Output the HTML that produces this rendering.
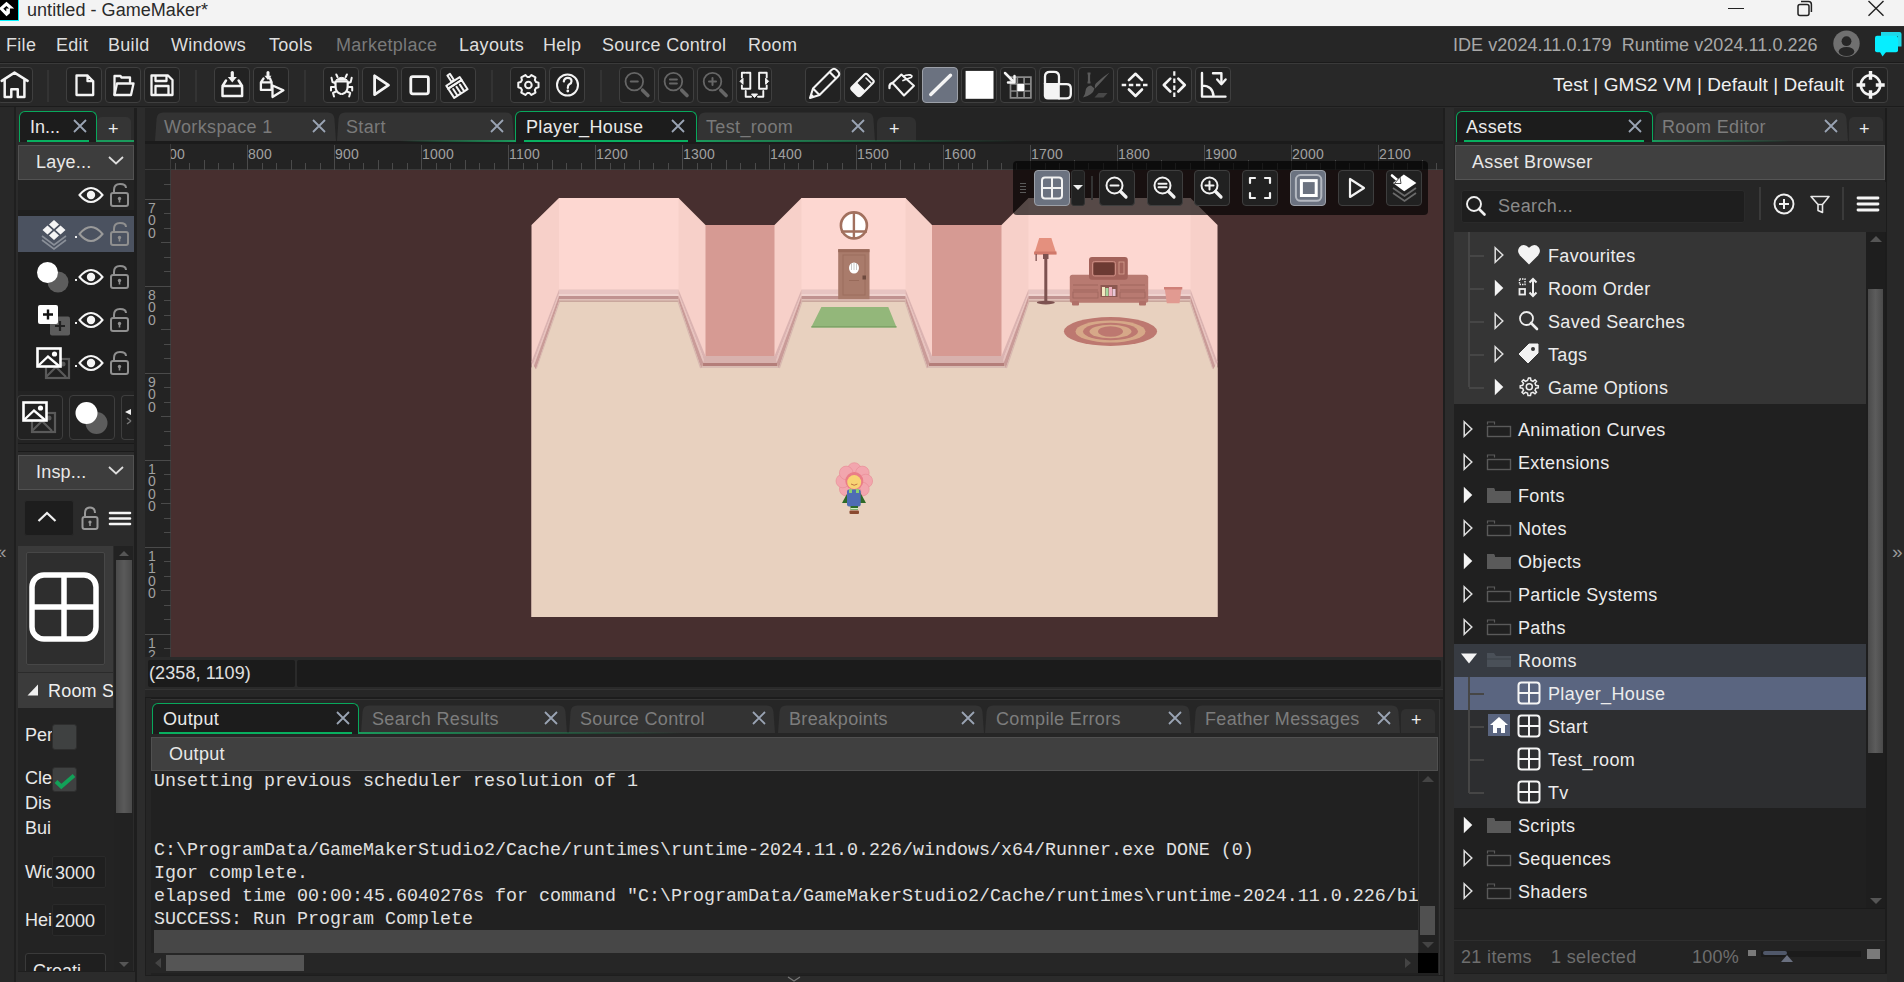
<!DOCTYPE html>
<html><head><meta charset="utf-8">
<style>
*{box-sizing:border-box;margin:0;padding:0}
html,body{width:1904px;height:982px;overflow:hidden;background:#2a2a2a;font-family:"Liberation Sans",sans-serif;color:#dedede}
.a{position:absolute}
.t{position:absolute;white-space:pre;font-size:18px;line-height:20px;letter-spacing:0.3px;color:#dedede}
.tb{position:absolute;top:67px;width:36px;height:36px;border:1px solid #3e3e3e;border-radius:4px;background:#232323}
.tb svg{position:absolute;left:0;top:0}
.sep{position:absolute;top:71px;width:2px;height:30px;background:#303030}
.tab{position:absolute;height:30px;background:#333;border-radius:6px 6px 0 0}
.tab .x{position:absolute;top:5px;right:10px}
.mono{position:absolute;white-space:pre;font-family:"Liberation Mono",monospace;font-size:18.33px;line-height:23px;color:#e0e0e0}
</style></head><body>

<!-- TITLE BAR -->
<div class="a" style="left:0;top:0;width:1904px;height:26px;background:#f3f3f3"></div>
<div class="a" style="left:0;top:0;width:18.8px;height:21px;background:#00f4ff"></div><div class="a" style="left:0;top:0;width:17.5px;height:20px;background:#000"></div>
<svg class="a" style="left:0;top:0" width="18" height="20"><path d="M6.5 1.8 L14.2 8.5 H9.9 V13.2 L6.5 16.3 L-1 8.5 Z M6.4 5.9 L9.1 8.5 H6.3 V11.6 L3.3 8.8 Z" fill="#fff" fill-rule="evenodd"/></svg>
<div class="t" style="left:27px;top:0px;color:#2a2a2a;letter-spacing:0.05px">untitled - GameMaker*</div>
<div class="a" style="left:1728px;top:8px;width:16px;height:1px;background:#222"></div>
<svg class="a" style="left:1796px;top:0px" width="18" height="17"><rect x="2" y="4.6" width="11" height="11" rx="2" fill="none" stroke="#222" stroke-width="1.5"/><path d="M5 1.6 H12.5 Q15.4 1.6 15.4 4.5 V12" fill="none" stroke="#222" stroke-width="1.5"/></svg>
<svg class="a" style="left:1867px;top:0px" width="18" height="18"><path d="M1.5 1 L16.5 15.8 M16.5 1 L1.5 15.8" stroke="#222" stroke-width="1.4"/></svg>

<!-- MENU BAR -->
<div class="a" style="left:0;top:26px;width:1904px;height:37px;background:#262626;border-top:1px solid #2e2e2e;border-bottom:1px solid #1b1b1b"></div>
<div class="t" style="left:6px;top:35px">File</div>
<div class="t" style="left:56px;top:35px">Edit</div>
<div class="t" style="left:108px;top:35px">Build</div>
<div class="t" style="left:171px;top:35px">Windows</div>
<div class="t" style="left:269px;top:35px">Tools</div>
<div class="t" style="left:336px;top:35px;color:#7a7a7a">Marketplace</div>
<div class="t" style="left:459px;top:35px">Layouts</div>
<div class="t" style="left:543px;top:35px">Help</div>
<div class="t" style="left:602px;top:35px">Source Control</div>
<div class="t" style="left:748px;top:35px">Room</div>
<div class="t" style="left:1453px;top:35px;color:#a8a8a8;letter-spacing:0.05px">IDE v2024.11.0.179  Runtime v2024.11.0.226</div>

<svg class="a" style="left:1832px;top:29px" width="30" height="30"><defs><clipPath id="avc"><circle cx="14.5" cy="14.6" r="13.2"/></clipPath></defs><circle cx="14.5" cy="14.6" r="13.2" fill="#707070"/><g clip-path="url(#avc)"><circle cx="14.5" cy="12.2" r="4.9" fill="#262626"/><ellipse cx="14.5" cy="22.5" rx="7.8" ry="4.6" fill="#262626"/></g></svg>
<svg class="a" style="left:1872px;top:29px" width="32" height="30"><path d="M9 3 H27.5 Q29.5 3 29.5 5 V17.5 H26 V7 H9 Z" fill="#1ed8e8"/><rect x="3" y="6.8" width="23" height="16.5" rx="2" fill="#06eeff"/><path d="M8 23 L10.5 27.5 L14 23 Z" fill="#06eeff"/></svg>
<!-- TOOLBAR -->
<div class="a" style="left:0;top:63px;width:1904px;height:44px;background:#282828;border-top:1px solid #3a3a3a;border-bottom:1px solid #1c1c1c"></div>
<div class="a" style="left:-3px;top:67px;width:36px;height:36px;border:1px solid #3f3f3f;border-radius:4px;background:#222;"></div>
<div class="a" style="left:66px;top:67px;width:36px;height:36px;border:1px solid #3f3f3f;border-radius:4px;background:#222;"></div>
<div class="a" style="left:105px;top:67px;width:36px;height:36px;border:1px solid #3f3f3f;border-radius:4px;background:#222;"></div>
<div class="a" style="left:144px;top:67px;width:36px;height:36px;border:1px solid #3f3f3f;border-radius:4px;background:#222;"></div>
<div class="a" style="left:214px;top:67px;width:36px;height:36px;border:1px solid #3f3f3f;border-radius:4px;background:#222;"></div>
<div class="a" style="left:253px;top:67px;width:36px;height:36px;border:1px solid #3f3f3f;border-radius:4px;background:#222;"></div>
<div class="a" style="left:323px;top:67px;width:36px;height:36px;border:1px solid #3f3f3f;border-radius:4px;background:#222;"></div>
<div class="a" style="left:362px;top:67px;width:36px;height:36px;border:1px solid #3f3f3f;border-radius:4px;background:#222;"></div>
<div class="a" style="left:401px;top:67px;width:36px;height:36px;border:1px solid #3f3f3f;border-radius:4px;background:#222;"></div>
<div class="a" style="left:440px;top:67px;width:36px;height:36px;border:1px solid #3f3f3f;border-radius:4px;background:#222;"></div>
<div class="a" style="left:510px;top:67px;width:36px;height:36px;border:1px solid #3f3f3f;border-radius:4px;background:#222;"></div>
<div class="a" style="left:549px;top:67px;width:36px;height:36px;border:1px solid #3f3f3f;border-radius:4px;background:#222;"></div>
<div class="a" style="left:619px;top:67px;width:36px;height:36px;border:1px solid #3f3f3f;border-radius:4px;background:#222;"></div>
<div class="a" style="left:658px;top:67px;width:36px;height:36px;border:1px solid #3f3f3f;border-radius:4px;background:#222;"></div>
<div class="a" style="left:697px;top:67px;width:36px;height:36px;border:1px solid #3f3f3f;border-radius:4px;background:#222;"></div>
<div class="a" style="left:736px;top:67px;width:36px;height:36px;border:1px solid #3f3f3f;border-radius:4px;background:#222;"></div>
<div class="a" style="left:805px;top:67px;width:36px;height:36px;border:1px solid #3f3f3f;border-radius:4px;background:#222;"></div>
<div class="a" style="left:844px;top:67px;width:36px;height:36px;border:1px solid #3f3f3f;border-radius:4px;background:#222;"></div>
<div class="a" style="left:883px;top:67px;width:36px;height:36px;border:1px solid #3f3f3f;border-radius:4px;background:#222;"></div>
<div class="a" style="left:922px;top:67px;width:36px;height:36px;border:1px solid #3f3f3f;border-radius:4px;background:#222;background:#6b7280;border-color:#9ca0a8"></div>
<div class="a" style="left:961px;top:67px;width:36px;height:36px;border:1px solid #3f3f3f;border-radius:4px;background:#222;"></div>
<div class="a" style="left:1000px;top:67px;width:36px;height:36px;border:1px solid #3f3f3f;border-radius:4px;background:#222;"></div>
<div class="a" style="left:1039px;top:67px;width:36px;height:36px;border:1px solid #3f3f3f;border-radius:4px;background:#222;"></div>
<div class="a" style="left:1078px;top:67px;width:36px;height:36px;border:1px solid #3f3f3f;border-radius:4px;background:#222;"></div>
<div class="a" style="left:1117px;top:67px;width:36px;height:36px;border:1px solid #3f3f3f;border-radius:4px;background:#222;"></div>
<div class="a" style="left:1156px;top:67px;width:36px;height:36px;border:1px solid #3f3f3f;border-radius:4px;background:#222;"></div>
<div class="a" style="left:1195px;top:67px;width:36px;height:36px;border:1px solid #3f3f3f;border-radius:4px;background:#222;"></div>
<div class="a" style="left:1852px;top:67px;width:36px;height:36px;border:1px solid #3f3f3f;border-radius:4px;background:#222;"></div>
<div class="a" style="left:47px;top:70px;width:2px;height:32px;background:#333"></div>
<div class="a" style="left:195px;top:70px;width:2px;height:32px;background:#333"></div>
<div class="a" style="left:304px;top:70px;width:2px;height:32px;background:#333"></div>
<div class="a" style="left:491px;top:70px;width:2px;height:32px;background:#333"></div>
<div class="a" style="left:600px;top:70px;width:2px;height:32px;background:#333"></div>
<svg class="a" style="left:0;top:63px" width="1904" height="44" viewBox="0 63 1904 44"><path d="M1.7 80.9 L14.5 72.6 L27.6 80.9 M4.7 79.5 V96.9 H11.3 V89.2 H17.75 V96.9 H24.4 V79.5" stroke="#f4f4f4" fill="none" stroke-linejoin="round" stroke-linecap="round" stroke-width="2.5"/><path d="M76.5 75.5 H87.5 L93.2 81.2 V95 H76.5 Z M87.5 75.5 V81.2 H93.2" stroke="#f4f4f4" fill="none" stroke-linejoin="round" stroke-linecap="round" stroke-width="2.3"/><path d="M114.5 95 V76 H120.5 L121.5 77.5 H130 V82" stroke="#f4f4f4" fill="none" stroke-linejoin="round" stroke-linecap="round" stroke-width="2.3"/><path d="M114.5 95 L117 83.5 H133.5 L131 95 Z" stroke="#f4f4f4" fill="none" stroke-linejoin="round" stroke-linecap="round" stroke-width="2.3"/><path d="M151.5 75.5 H168 L172.5 80 V95 H151.5 Z M155.5 75.5 V81 H166.5 V75.5 M155.5 95 V86 H168.5 V95" stroke="#f4f4f4" fill="none" stroke-linejoin="round" stroke-linecap="round" stroke-width="2.3"/><path d="M222.5 86 H242.1 V95.9 H222.5 Z M222.5 86 L226 80.5 M242.1 86 L238.6 80.5" stroke="#f4f4f4" fill="none" stroke-linejoin="round" stroke-linecap="round" stroke-width="2.5"/><path d="M232.3 72.5 V78" stroke="#f4f4f4" fill="none" stroke-linejoin="round" stroke-linecap="round" stroke-width="3.2"/><path d="M227.8 77 H236.8 L232.3 82.5 Z" fill="#f4f4f4"/><path d="M260.9 82.3 H271.6 V89.9 H260.9 Z M260.9 82.3 L263.5 78.5 M271.6 82.3 L270 78.5" stroke="#f4f4f4" fill="none" stroke-linejoin="round" stroke-linecap="round" stroke-width="2.3"/><path d="M268 72.5 V76.5" stroke="#f4f4f4" fill="none" stroke-linejoin="round" stroke-linecap="round" stroke-width="3"/><path d="M264.5 75.8 H271.5 L268 80 Z" fill="#f4f4f4"/><path d="M272.5 85.5 V97 L283.4 90.3 Z" stroke="#f4f4f4" fill="none" stroke-linejoin="round" stroke-linecap="round" stroke-width="2.3" fill="#222"/><path d="M335.8 80.2 Q341.6 74.5 347.4 80.2 Z" fill="#f4f4f4" stroke="#f4f4f4" stroke-width="1"/><path d="M337.5 77 L336.3 74.5 M345.7 77 L346.9 74.5" stroke="#f4f4f4" fill="none" stroke-linejoin="round" stroke-linecap="round" stroke-width="2"/><path d="M340.8 94 Q335.5 92.5 335.5 86 V81.5 H347.7 V86 Q347.7 92.5 342.4 94" stroke="#f4f4f4" fill="none" stroke-linejoin="round" stroke-linecap="round" stroke-width="2.2"/><path d="M335 83 L332.5 82 L331.5 77.8 M348.2 83 L350.7 82 L351.7 77.8 M334.5 87 H331 V90.5 M348.7 87 H352.2 V90.5 M336 91.5 L333 93 L334 96.5 M347.2 91.5 L350.2 93 L349.2 96.5" stroke="#f4f4f4" fill="none" stroke-linejoin="round" stroke-linecap="round" stroke-width="2"/><path d="M374.6 75.8 V94.7 L388.5 85.2 Z" stroke="#f4f4f4" fill="none" stroke-linejoin="round" stroke-linecap="round" stroke-width="2.8"/><rect x="410.8" y="76.6" width="17.6" height="17.2" rx="2" stroke="#f4f4f4" fill="none" stroke-linejoin="round" stroke-linecap="round" stroke-width="2.8"/><g transform="rotate(-33 456 86)"><path d="M454.5 72.5 H457.5 V80 H454.5 Z" stroke="#f4f4f4" fill="none" stroke-linejoin="round" stroke-linecap="round" stroke-width="2"/><path d="M448 80.5 H464 V84 H448 Z" stroke="#f4f4f4" fill="none" stroke-linejoin="round" stroke-linecap="round" stroke-width="2"/><path d="M448 84 H464 V95 H448 Z M452 87 V95 M456 87 V95 M460 87 V95" stroke="#f4f4f4" fill="none" stroke-linejoin="round" stroke-linecap="round" stroke-width="2"/></g><path d="M521.94 79.95 L521.31 77.39 L525.36 75.05 L527.26 76.88 L529.54 76.88 L531.44 75.05 L535.49 77.39 L534.86 79.95 L536.00 81.93 L538.53 82.66 L538.53 87.34 L536.00 88.07 L534.86 90.05 L535.49 92.61 L531.44 94.95 L529.54 93.12 L527.26 93.12 L525.36 94.95 L521.31 92.61 L521.94 90.05 L520.80 88.07 L518.27 87.34 L518.27 82.66 L520.80 81.93 Z" stroke="#f4f4f4" fill="none" stroke-linejoin="round" stroke-linecap="round" stroke-width="2"/><circle cx="528.4" cy="85" r="3.3" stroke="#f4f4f4" fill="none" stroke-linejoin="round" stroke-linecap="round" stroke-width="2"/><circle cx="567.5" cy="85" r="10.5" stroke="#f4f4f4" fill="none" stroke-linejoin="round" stroke-linecap="round" stroke-width="2"/><path d="M563.8 81.5 Q564.3 77.8 567.8 77.8 Q571.5 77.8 571.5 81.2 Q571.5 83.2 569.3 84.3 Q567.8 85.1 567.8 88" stroke="#f4f4f4" fill="none" stroke-linejoin="round" stroke-linecap="round" stroke-width="2.2"/><circle cx="567.8" cy="91" r="1.4" fill="#f4f4f4"/><g stroke="#666" fill="none" stroke-linecap="round"><circle cx="634.3" cy="81.6" r="8.8" stroke-width="1.8"/><path d="M630.8 81.6 H637.8" stroke-width="2"/><path d="M642.5999999999999 90.2 L647.9 95.5" stroke-width="3.6"/></g><g stroke="#666" fill="none" stroke-linecap="round"><circle cx="673.4" cy="81.6" r="8.8" stroke-width="1.8"/><path d="M669.9 79.6 H676.9 M669.9 83.6 H676.9" stroke-width="2"/><path d="M681.6999999999999 90.2 L687.0 95.5" stroke-width="3.6"/></g><g stroke="#666" fill="none" stroke-linecap="round"><circle cx="712.5" cy="81.6" r="8.8" stroke-width="1.8"/><path d="M709 81.6 H716 M712.5 78.1 V85.1" stroke-width="2"/><path d="M720.8 90.2 L726.1 95.5" stroke-width="3.6"/></g><path d="M745 72.8 H741.9 V77.5 M741.9 85.5 V88.8 H750.3 V72.8 H746.5 M762.5 72.8 H759.1 V88.8 H766.7 V85.5 M766.7 77.5 V72.8 H763.5" stroke="#f4f4f4" fill="none" stroke-linejoin="round" stroke-linecap="round" stroke-width="1.9"/><path d="M745.7 90.9 V96.8 H751 M763.3 90.9 V96.8 H758" stroke="#f4f4f4" fill="none" stroke-linejoin="round" stroke-linecap="round" stroke-width="1.9"/><path d="M740 81.3 L743 78.3 V84.3 Z M768.6 81.3 L765.6 78.3 V84.3 Z M751.5 94 H757.5 L754.5 97.5 Z" fill="#f4f4f4" stroke="#f4f4f4" stroke-width="1"/><path d="M810 98 L813 88.5 L831.5 70 Q834 67.5 836.5 70 L838 71.5 Q840.5 74 838 76.5 L819.5 95 Z M813 88.5 L819.5 95 M829.6 72 L836.1 78.5" stroke="#f4f4f4" fill="none" stroke-linejoin="round" stroke-linecap="round" stroke-width="2.1"/><path d="M810 98 L811.4 93.6 L814.4 96.6 Z" fill="#f4f4f4"/><path d="M852 87 L864.5 74.5 Q866 73 867.5 74.5 L873 80 Q874.5 81.5 873 83 L860.5 95.5 Q859 97 857.5 95.5 L852 90 Q850.5 88.5 852 87 Z" stroke="#f4f4f4" fill="none" stroke-linejoin="round" stroke-linecap="round" stroke-width="2.1"/><path d="M852 87 L856.8 82.2 L865.3 90.7 L860.5 95.5 Q859 97 857.5 95.5 L852 90 Q850.5 88.5 852 87 Z" fill="#f4f4f4"/><path d="M866 78 L871 83" stroke="#f4f4f4" fill="none" stroke-linejoin="round" stroke-linecap="round" stroke-width="1.6"/><path d="M901.4 74.5 L913.9 85.7 L904 95.5 L892.6 83 Z" stroke="#f4f4f4" fill="none" stroke-linejoin="round" stroke-linecap="round" stroke-width="2.1"/><path d="M903 80.5 L911 77.5 Q913 75.8 910.5 75 Q906 74.5 903.5 76.5" stroke="#f4f4f4" fill="none" stroke-linejoin="round" stroke-linecap="round" stroke-width="1.8"/><path d="M892.6 83 Q889 83.5 889.5 88" stroke="#f4f4f4" fill="none" stroke-linejoin="round" stroke-linecap="round" stroke-width="2.3"/><path d="M930.8 94.5 L950.5 75.2" stroke="#f4f4f4" stroke-width="3.4" stroke-linecap="round"/><rect x="965.6" y="70.9" width="27.9" height="27.9" fill="#fff"/><path d="M1010.5 77.2 H1030.9 V97.8 H1010.5 Z M1010.5 84 H1030.9 M1010.5 91 H1030.9 M1017.3 77.2 V97.8 M1024.1 77.2 V97.8" stroke="#8a8a8a" stroke-width="1.7" fill="none"/><rect x="1017.3" y="84" width="6.8" height="7" fill="#fff"/><path d="M1005 73 L1013.5 81.5" stroke="#f4f4f4" fill="none" stroke-linejoin="round" stroke-linecap="round" stroke-width="2.5"/><path d="M1008 82.5 H1014.5 V76" stroke="#f4f4f4" fill="none" stroke-linejoin="round" stroke-linecap="round" stroke-width="2.5"/><path d="M1045 84 V76.5 Q1045 71.8 1050 71.8 H1054 Q1059 71.8 1059 76.5 V84" stroke="#f4f4f4" fill="none" stroke-linejoin="round" stroke-linecap="round" stroke-width="2.3"/><path d="M1059 84.2 H1066.5 Q1070.8 84.2 1070.8 88.5 V94 Q1070.8 98.4 1066.5 98.4 H1059" stroke="#f4f4f4" fill="none" stroke-linejoin="round" stroke-linecap="round" stroke-width="2.3"/><path d="M1043.8 83 H1059.8 V99.5 H1048 Q1043.8 99.5 1043.8 95.3 Z" fill="#f4f4f4"/><path d="M1109.5 72.5 Q1106 77 1097 86.5 L1095 88.5 Q1094 84 1097.5 82 Q1104 76 1109.5 72.5 Z" fill="#5a5a5a"/><path d="M1094.5 88.5 Q1093 95 1083 97.5 Q1085.5 94 1085.5 91 Q1086 86 1091 85.5 Z" fill="#5a5a5a"/><path d="M1094.5 97.5 L1098.5 93 H1107.5 L1103.5 97.5 Z" fill="#484848"/><path d="M1087.5 73.5 H1090.5 M1089 73.5 V82.5 M1087.5 82.5 H1090.5" stroke="#5a5a5a" stroke-width="2.2"/><path d="M1128.9 80.1 L1135.5 73.8 L1142 80.1 M1128.9 89.5 L1135.5 96 L1142 89.5" stroke="#f4f4f4" fill="none" stroke-linejoin="round" stroke-linecap="round" stroke-width="2.6"/><path d="M1121.7 85 H1149.2" stroke="#f4f4f4" stroke-width="2.4" stroke-dasharray="4.5 2.6"/><path d="M1170.3 78.6 L1163.8 85 L1170.3 91.5 M1178.3 78.6 L1184.8 85 L1178.3 91.5" stroke="#f4f4f4" fill="none" stroke-linejoin="round" stroke-linecap="round" stroke-width="2.6"/><path d="M1174.3 71.3 V98.7" stroke="#f4f4f4" stroke-width="2.2" stroke-dasharray="4.5 2.6"/><path d="M1202 73 V96.6 H1225.5 M1202 85.6 Q1213 85.6 1213.6 96.6" stroke="#f4f4f4" fill="none" stroke-linejoin="round" stroke-linecap="round" stroke-width="2.4"/><path d="M1213 73.2 H1221.4 V82" stroke="#f4f4f4" fill="none" stroke-linejoin="round" stroke-linecap="round" stroke-width="2.4"/><path d="M1217.2 79.5 L1221.4 84.2 L1225.6 79.5" stroke="#f4f4f4" fill="none" stroke-linejoin="round" stroke-linecap="round" stroke-width="2.4"/><circle cx="1870.5" cy="85" r="9.7" stroke="#f4f4f4" fill="none" stroke-linejoin="round" stroke-linecap="round" stroke-width="2.6"/><path d="M1870.5 71.1 V79.8 M1870.5 90.3 V98.7 M1856.5 85 H1865.2 M1875.8 85 H1884.7" stroke="#f4f4f4" stroke-width="3.4"/></svg>
<div class="t" style="left:1553px;top:75px;font-size:19px;letter-spacing:0.05px;color:#f0f0f0">Test | GMS2 VM | Default | Default</div>

<!-- MAIN BG -->
<div class="a" style="left:0;top:107px;width:1904px;height:875px;background:#2b2b2b"></div>

<!-- LEFT GUTTER -->
<div class="a" style="left:0;top:107px;width:16px;height:875px;background:#282828;border-right:2px solid #1f1f1f"></div>
<div class="t" style="left:-4px;top:542px;font-size:19px;color:#9a9a9a;letter-spacing:-1px">&#171;</div>

<!-- LEFT PANEL -->
<div class="a" style="left:18px;top:108px;width:117px;height:867px;background:#2b2b2b"></div>
<div class="a" style="left:134px;top:108px;width:3px;height:874px;background:#1e1e1e"></div>
<div class="a" style="left:137px;top:108px;width:8px;height:874px;background:#2c2c2c"></div>
<!-- panel tabs -->
<div class="a" style="left:19px;top:111px;width:78px;height:31px;background:#1c1c1c;border:1.5px solid #08a85c;border-bottom:none;border-radius:6px 6px 0 0"></div>
<div class="a" style="left:27px;top:140px;width:62px;height:2.2px;background:#08b060"></div>
<div class="t" style="left:30px;top:117px;color:#e8e8e8;letter-spacing:0">In...</div>
<svg class="a" style="left:72px;top:118px" width="16" height="16"><path d="M2 2 L14 14 M14 2 L2 14" stroke="#9aa4b4" stroke-width="1.8"/></svg>
<div class="a" style="left:97px;top:117px;width:34px;height:24px;background:#353535;border-radius:5px 5px 0 0"></div>
<div class="t" style="left:108px;top:119px;color:#eee">+</div>
<div class="a" style="left:96px;top:140px;width:38px;height:2px;background:#1a9a5c"></div>
<!-- Layers dropdown -->
<div class="a" style="left:18px;top:145px;width:116px;height:35px;background:#3d3d3d;border:1px solid #525252"></div>
<div class="t" style="left:36px;top:152px;color:#e8e8e8;letter-spacing:0.2px">Laye...</div>
<svg class="a" style="left:107px;top:155px" width="18" height="12"><path d="M2 2 L9 8.5 L16 2" stroke="#ddd" stroke-width="1.8" fill="none"/></svg>
<!-- layer list -->
<div class="a" style="left:18px;top:180px;width:116px;height:211px;background:#1f1f1f"></div>
<div class="a" style="left:18px;top:180px;width:116px;height:30px;background:#232323"></div>
<div class="a" style="left:18px;top:216px;width:116px;height:36px;background:#4b5260"></div>
<!-- layer rows -->
<svg class="a" style="left:78px;top:186px" width="27" height="18"><path d="M1.5 9 Q13 -5 24.5 9 Q13 23 1.5 9 Z" stroke="#f5f5f5" stroke-width="2" fill="none"/><circle cx="13" cy="9" r="4.2" fill="#f5f5f5"/></svg><svg class="a" style="left:109px;top:182px" width="22" height="26"><path d="M5 11 V8 Q5 2 11 2 Q17 2 17 6" stroke="#8f8f8f" stroke-width="2" fill="none"/><rect x="2" y="11" width="17" height="13" rx="2" stroke="#8f8f8f" stroke-width="2" fill="none"/><circle cx="10.5" cy="16.5" r="1.7" fill="#8f8f8f"/><path d="M10.5 16.5 V20.5" stroke="#8f8f8f" stroke-width="1.6"/></svg><svg class="a" style="left:38px;top:218px" width="32" height="32"><path d="M15.5 8 L22 14 L15.5 20 L9 14 Z" stroke="none" fill="none"/><path d="M16 2 L21 6.5 L16 11 L11 6.5 Z M9.5 7.5 L14.5 12 L9.5 16.5 L4.5 12 Z M22.5 7.5 L27.5 12 L22.5 16.5 L17.5 12 Z M16 13 L21 17.5 L16 22 L11 17.5 Z" fill="#f5f5f5"/><path d="M4 18 L16 27 L28 18 M4 22 L16 31 L28 22" stroke="#8a8f98" stroke-width="1.6" fill="none"/></svg><div class="a" style="left:75px;top:236px;width:2px;height:2px;background:#eee"></div><svg class="a" style="left:78px;top:225px" width="27" height="18"><path d="M1.5 9 Q13 -5 24.5 9 Q13 23 1.5 9 Z" stroke="#9a9a9a" stroke-width="2" fill="none"/></svg><svg class="a" style="left:109px;top:221px" width="22" height="26"><path d="M5 11 V8 Q5 2 11 2 Q17 2 17 6" stroke="#8f8f8f" stroke-width="2" fill="none"/><rect x="2" y="11" width="17" height="13" rx="2" stroke="#8f8f8f" stroke-width="2" fill="none"/><circle cx="10.5" cy="16.5" r="1.7" fill="#8f8f8f"/><path d="M10.5 16.5 V20.5" stroke="#8f8f8f" stroke-width="1.6"/></svg><svg class="a" style="left:35px;top:259px" width="36" height="36"><circle cx="23" cy="23" r="10.5" fill="#5d5d5d"/><circle cx="12.5" cy="13.5" r="10.5" fill="#fff"/></svg><div class="a" style="left:75px;top:279px;width:2px;height:2px;background:#eee"></div><svg class="a" style="left:78px;top:268px" width="27" height="18"><path d="M1.5 9 Q13 -5 24.5 9 Q13 23 1.5 9 Z" stroke="#f5f5f5" stroke-width="2" fill="none"/><circle cx="13" cy="9" r="4.2" fill="#f5f5f5"/></svg><svg class="a" style="left:109px;top:264px" width="22" height="26"><path d="M5 11 V8 Q5 2 11 2 Q17 2 17 6" stroke="#8f8f8f" stroke-width="2" fill="none"/><rect x="2" y="11" width="17" height="13" rx="2" stroke="#8f8f8f" stroke-width="2" fill="none"/><circle cx="10.5" cy="16.5" r="1.7" fill="#8f8f8f"/><path d="M10.5 16.5 V20.5" stroke="#8f8f8f" stroke-width="1.6"/></svg><svg class="a" style="left:36px;top:303px" width="36" height="36"><rect x="14" y="13.5" width="20" height="19" rx="2" fill="#5d5d5d"/><path d="M24 18 V28 M19 23 H29" stroke="#222" stroke-width="2.2"/><rect x="2" y="2" width="20" height="19" rx="2" fill="#fff"/><path d="M12 6.5 V16.5 M7 11.5 H17" stroke="#111" stroke-width="2.4"/></svg><div class="a" style="left:75px;top:322px;width:2px;height:2px;background:#eee"></div><svg class="a" style="left:78px;top:311px" width="27" height="18"><path d="M1.5 9 Q13 -5 24.5 9 Q13 23 1.5 9 Z" stroke="#f5f5f5" stroke-width="2" fill="none"/><circle cx="13" cy="9" r="4.2" fill="#f5f5f5"/></svg><svg class="a" style="left:109px;top:307px" width="22" height="26"><path d="M5 11 V8 Q5 2 11 2 Q17 2 17 6" stroke="#8f8f8f" stroke-width="2" fill="none"/><rect x="2" y="11" width="17" height="13" rx="2" stroke="#8f8f8f" stroke-width="2" fill="none"/><circle cx="10.5" cy="16.5" r="1.7" fill="#8f8f8f"/><path d="M10.5 16.5 V20.5" stroke="#8f8f8f" stroke-width="1.6"/></svg><svg class="a" style="left:35px;top:346px" width="38" height="36"><g stroke="#5a5a5a" stroke-width="2.2" fill="none"><rect x="11" y="13" width="23" height="19"/><path d="M11 31 L21 21 L31 31"/></g><circle cx="28" cy="18" r="2.5" fill="#5a5a5a"/><rect x="2.5" y="2.5" width="23" height="18" fill="#222" stroke="#fff" stroke-width="2.6"/><path d="M3 20 L13 10.5 L24 20" stroke="#fff" stroke-width="2.4" fill="none"/><circle cx="19.5" cy="8" r="2.6" fill="#fff"/></svg><div class="a" style="left:75px;top:365px;width:2px;height:2px;background:#eee"></div><svg class="a" style="left:78px;top:354px" width="27" height="18"><path d="M1.5 9 Q13 -5 24.5 9 Q13 23 1.5 9 Z" stroke="#f5f5f5" stroke-width="2" fill="none"/><circle cx="13" cy="9" r="4.2" fill="#f5f5f5"/></svg><svg class="a" style="left:109px;top:350px" width="22" height="26"><path d="M5 11 V8 Q5 2 11 2 Q17 2 17 6" stroke="#8f8f8f" stroke-width="2" fill="none"/><rect x="2" y="11" width="17" height="13" rx="2" stroke="#8f8f8f" stroke-width="2" fill="none"/><circle cx="10.5" cy="16.5" r="1.7" fill="#8f8f8f"/><path d="M10.5 16.5 V20.5" stroke="#8f8f8f" stroke-width="1.6"/></svg>
<!-- layer type buttons -->
<div class="a" style="left:18px;top:391px;width:116px;height:52px;background:#232323"></div>
<div class="a" style="left:17px;top:395px;width:46px;height:45px;border:1px solid #3e3e3e;border-radius:4px;background:#222"></div>
<div class="a" style="left:69px;top:395px;width:46px;height:45px;border:1px solid #3e3e3e;border-radius:4px;background:#222"></div>
<div class="a" style="left:121px;top:395px;width:13px;height:45px;border:1px solid #3e3e3e;border-right:none;border-radius:4px 0 0 4px;background:#222"></div>
<svg class="a" style="left:21px;top:400px" width="38" height="36"><g stroke="#5a5a5a" stroke-width="2.2" fill="none"><rect x="11" y="13" width="23" height="19"/><path d="M11 31 L21 21 L31 31"/></g><circle cx="28" cy="18" r="2.5" fill="#5a5a5a"/><rect x="2.5" y="2.5" width="23" height="18" fill="#222" stroke="#fff" stroke-width="2.6"/><path d="M3 20 L13 10.5 L24 20" stroke="#fff" stroke-width="2.4" fill="none"/><circle cx="19.5" cy="8" r="2.6" fill="#fff"/></svg><svg class="a" style="left:73px;top:400px" width="36" height="36"><circle cx="23.5" cy="23" r="11" fill="#5d5d5d"/><circle cx="13.5" cy="13" r="11" fill="#fff"/></svg><svg class="a" style="left:124px;top:408px" width="10" height="20"><path d="M1 4 L7 1 V7 Z" fill="#eee"/><path d="M3 10 L7 13 M3 16 L7 13" stroke="#777" stroke-width="1.5"/></svg>
<div class="a" style="left:18px;top:443px;width:116px;height:9px;background:#262626;border-top:1px solid #1a1a1a;border-bottom:1px solid #1a1a1a"></div>
<!-- Inspector dropdown -->
<div class="a" style="left:18px;top:455px;width:116px;height:35px;background:#3d3d3d;border:1px solid #525252"></div>
<div class="t" style="left:36px;top:462px;color:#e8e8e8;letter-spacing:0.2px">Insp...</div>
<svg class="a" style="left:107px;top:465px" width="18" height="12"><path d="M2 2 L9 8.5 L16 2" stroke="#ddd" stroke-width="1.8" fill="none"/></svg>
<!-- inspector toolbar -->
<div class="a" style="left:24px;top:500px;width:50px;height:36px;background:#1d1d1d;border:1px solid #2a2a2a;border-radius:3px"></div>
<svg class="a" style="left:36px;top:510px" width="22" height="14"><path d="M2.5 11 L11 3 L19.5 11" stroke="#f0f0f0" stroke-width="2.2" fill="none"/></svg>
<svg class="a" style="left:80px;top:504px" width="20" height="28"><path d="M5 13 V9 Q5 3.5 10 3.5 Q15 3.5 15 9" stroke="#9a9a9a" stroke-width="2" fill="none"/><rect x="2.5" y="13" width="15" height="12" rx="2" stroke="#9a9a9a" stroke-width="2" fill="none"/><circle cx="10" cy="18" r="1.6" fill="#9a9a9a"/><path d="M10 18 V22" stroke="#9a9a9a" stroke-width="1.5"/></svg>
<svg class="a" style="left:108px;top:510px" width="24" height="18"><path d="M2 3 H22 M2 8.5 H22 M2 14 H22" stroke="#f5f5f5" stroke-width="2.6" stroke-linecap="round"/></svg>
<!-- thumbnail -->
<div class="a" style="left:18px;top:546px;width:95px;height:126px;background:#3a3a3a"></div>
<div class="a" style="left:26px;top:552px;width:79px;height:113px;background:#2e2e2e;border:1px solid #474747;border-radius:2px"></div>
<svg class="a" style="left:29px;top:572px" width="70" height="70"><rect x="3" y="3" width="64" height="64" rx="12" stroke="#fff" stroke-width="5.5" fill="none"/><path d="M35 3 V67 M3 35 H67" stroke="#fff" stroke-width="5.5"/></svg>
<!-- inspector scrollbar -->
<div class="a" style="left:114px;top:546px;width:19px;height:425px;background:#222"></div>
<div class="a" style="left:116px;top:560px;width:16px;height:253px;background:linear-gradient(90deg,#4a4a4a,#5a5a5a 50%,#4a4a4a)"></div>
<svg class="a" style="left:117px;top:548px" width="14" height="10"><path d="M2 8 L7 3 L12 8 Z" fill="#555"/></svg>
<svg class="a" style="left:117px;top:960px" width="14" height="10"><path d="M2 2 L7 7 L12 2 Z" fill="#555"/></svg>
<!-- Room Settings header -->
<div class="a" style="left:18px;top:673px;width:95px;height:35px;background:#3b3b3b"></div>
<svg class="a" style="left:26px;top:683px" width="14" height="14"><path d="M12 1.5 V12.5 H1.5 Z" fill="#f0f0f0"/></svg>
<div class="a" style="left:18px;top:708px;width:96px;height:263px;background:#232323;overflow:hidden">
  <div class="t" style="left:7px;top:17px;color:#e8e8e8;letter-spacing:0">Per</div>
  <div class="a" style="left:34px;top:16px;width:25px;height:26px;background:#3f4141;border:1px solid #2e2e2e;border-radius:3px"></div>
  <div class="t" style="left:7px;top:60px;color:#e8e8e8;letter-spacing:0">Cle</div>
  <div class="a" style="left:34px;top:59px;width:25px;height:25px;background:#3f4141;border:1px solid #2e2e2e;border-radius:3px"></div>
  <svg class="a" style="left:35px;top:61px" width="24" height="22"><path d="M3 12.5 L8.3 17.5 L21 6.5" stroke="#12a158" stroke-width="4" fill="none" stroke-linecap="butt" stroke-linejoin="miter"/></svg>
  <div class="t" style="left:7px;top:85px;color:#e8e8e8;letter-spacing:0">Dis</div>
  <div class="t" style="left:7px;top:110px;color:#e8e8e8;letter-spacing:0">Bui</div>
  <div class="t" style="left:7px;top:154px;color:#e8e8e8;letter-spacing:0">Wid</div>
  <div class="a" style="left:34px;top:148px;width:54px;height:32px;background:#1f1f1f;border:1px solid #2a2a2a;border-radius:2px;overflow:hidden"><div class="t" style="left:2px;top:6px;color:#e8e8e8;letter-spacing:0">3000</div></div>
  <div class="t" style="left:7px;top:202px;color:#e8e8e8;letter-spacing:0">Hei</div>
  <div class="a" style="left:34px;top:196px;width:54px;height:32px;background:#1f1f1f;border:1px solid #2a2a2a;border-radius:2px;overflow:hidden"><div class="t" style="left:2px;top:6px;color:#e8e8e8;letter-spacing:0">2000</div></div>
  <div class="a" style="left:7px;top:245px;width:81px;height:30px;background:#1f1f1f;border:1px solid #3a3a3a;border-radius:3px;overflow:hidden"><div class="t" style="left:7px;top:7px;color:#e8e8e8;letter-spacing:0">Creati</div></div>
</div>
<div class="t" style="left:48px;top:681px;color:#eee;letter-spacing:0.2px;width:65px;overflow:hidden">Room S</div>
<div class="a" style="left:18px;top:971px;width:117px;height:11px;background:#2b2b2b;border-top:1px solid #1e1e1e"></div>

<div class="a" style="left:145px;top:108px;width:1299px;height:37px;background:#242424"></div>
<div class="a" style="left:145px;top:141px;width:1299px;height:3px;background:#1b1b1b"></div>
<svg class="a" style="left:155px;top:112px" width="181" height="29"><path d="M0 29 L1.6 6.5 Q2.3 0.5 8 0.5 H173 Q178.7 0.5 179.4 6.5 L181 29 Z" fill="#333"/></svg><div class="t" style="left:164px;top:117px;color:#7a7a7a;letter-spacing:0.35px">Workspace 1</div><svg class="a" style="left:310.5px;top:118px" width="16" height="16"><path d="M2 2 L14 14 M14 2 L2 14" stroke="#9aa4b4" stroke-width="1.8"/></svg>
<svg class="a" style="left:337px;top:112px" width="177" height="29"><path d="M0 29 L1.6 6.5 Q2.3 0.5 8 0.5 H169 Q174.7 0.5 175.4 6.5 L177 29 Z" fill="#333"/></svg><div class="t" style="left:346px;top:117px;color:#7a7a7a;letter-spacing:0.35px">Start</div><svg class="a" style="left:488.5px;top:118px" width="16" height="16"><path d="M2 2 L14 14 M14 2 L2 14" stroke="#9aa4b4" stroke-width="1.8"/></svg>
<svg class="a" style="left:697px;top:112px" width="178" height="29"><path d="M0 29 L1.6 6.5 Q2.3 0.5 8 0.5 H170 Q175.7 0.5 176.4 6.5 L178 29 Z" fill="#333"/></svg><div class="t" style="left:706px;top:117px;color:#7a7a7a;letter-spacing:0.35px">Test_room</div><svg class="a" style="left:849.5px;top:118px" width="16" height="16"><path d="M2 2 L14 14 M14 2 L2 14" stroke="#9aa4b4" stroke-width="1.8"/></svg>
<div class="a" style="left:515px;top:111px;width:182px;height:31px;background:#1c1c1c;border:1.5px solid #08a85c;border-bottom:none;border-radius:6px 6px 0 0"></div><div class="a" style="left:524px;top:140px;width:164px;height:2.2px;background:#08b060"></div><div class="t" style="left:526px;top:117px;color:#eaeaea;letter-spacing:0.35px">Player_House</div><svg class="a" style="left:670px;top:118px" width="16" height="16"><path d="M2 2 L14 14 M14 2 L2 14" stroke="#9aa4b4" stroke-width="1.8"/></svg>
<div class="a" style="left:877px;top:117px;width:39px;height:24px;background:#303030;border-radius:6px 6px 0 0"></div><div class="t" style="left:889px;top:119px;color:#eee">+</div>
<div class="a" style="left:697px;top:140px;width:320px;height:2px;background:linear-gradient(90deg,#1a9a5c,rgba(26,154,92,0))"></div>
<div class="a" style="left:400px;top:140px;width:115px;height:2px;background:linear-gradient(90deg,rgba(26,154,92,0),#1a9a5c)"></div>
<div class="a" style="left:145px;top:144px;width:1299px;height:26px;background:#232323;border-bottom:1px solid #3a3a3a"></div>
<div class="a" style="left:145px;top:170px;width:26px;height:487px;background:#232323;border-right:1px solid #3a3a3a"></div>
<div class="a" style="left:171px;top:144px;width:1273px;height:26px;overflow:hidden"><div class="a" style="left:3.5px;top:19px;width:1px;height:7px;background:#4a4a4a"></div><div class="a" style="left:18.0px;top:19px;width:1px;height:7px;background:#4a4a4a"></div><div class="a" style="left:32.5px;top:16px;width:1px;height:10px;background:#4a4a4a"></div><div class="a" style="left:47.0px;top:19px;width:1px;height:7px;background:#4a4a4a"></div><div class="a" style="left:61.5px;top:19px;width:1px;height:7px;background:#4a4a4a"></div><div class="a" style="left:76.0px;top:1px;width:1px;height:25px;background:#4a4a4a"></div><div class="a" style="left:90.5px;top:19px;width:1px;height:7px;background:#4a4a4a"></div><div class="a" style="left:105.0px;top:19px;width:1px;height:7px;background:#4a4a4a"></div><div class="a" style="left:119.5px;top:16px;width:1px;height:10px;background:#4a4a4a"></div><div class="a" style="left:134.0px;top:19px;width:1px;height:7px;background:#4a4a4a"></div><div class="a" style="left:148.5px;top:19px;width:1px;height:7px;background:#4a4a4a"></div><div class="a" style="left:163.0px;top:1px;width:1px;height:25px;background:#4a4a4a"></div><div class="a" style="left:177.5px;top:19px;width:1px;height:7px;background:#4a4a4a"></div><div class="a" style="left:192.0px;top:19px;width:1px;height:7px;background:#4a4a4a"></div><div class="a" style="left:206.5px;top:16px;width:1px;height:10px;background:#4a4a4a"></div><div class="a" style="left:221.0px;top:19px;width:1px;height:7px;background:#4a4a4a"></div><div class="a" style="left:235.5px;top:19px;width:1px;height:7px;background:#4a4a4a"></div><div class="a" style="left:250.0px;top:1px;width:1px;height:25px;background:#4a4a4a"></div><div class="a" style="left:264.5px;top:19px;width:1px;height:7px;background:#4a4a4a"></div><div class="a" style="left:279.0px;top:19px;width:1px;height:7px;background:#4a4a4a"></div><div class="a" style="left:293.5px;top:16px;width:1px;height:10px;background:#4a4a4a"></div><div class="a" style="left:308.0px;top:19px;width:1px;height:7px;background:#4a4a4a"></div><div class="a" style="left:322.5px;top:19px;width:1px;height:7px;background:#4a4a4a"></div><div class="a" style="left:337.0px;top:1px;width:1px;height:25px;background:#4a4a4a"></div><div class="a" style="left:351.5px;top:19px;width:1px;height:7px;background:#4a4a4a"></div><div class="a" style="left:366.0px;top:19px;width:1px;height:7px;background:#4a4a4a"></div><div class="a" style="left:380.5px;top:16px;width:1px;height:10px;background:#4a4a4a"></div><div class="a" style="left:395.0px;top:19px;width:1px;height:7px;background:#4a4a4a"></div><div class="a" style="left:409.5px;top:19px;width:1px;height:7px;background:#4a4a4a"></div><div class="a" style="left:424.0px;top:1px;width:1px;height:25px;background:#4a4a4a"></div><div class="a" style="left:438.5px;top:19px;width:1px;height:7px;background:#4a4a4a"></div><div class="a" style="left:453.0px;top:19px;width:1px;height:7px;background:#4a4a4a"></div><div class="a" style="left:467.5px;top:16px;width:1px;height:10px;background:#4a4a4a"></div><div class="a" style="left:482.0px;top:19px;width:1px;height:7px;background:#4a4a4a"></div><div class="a" style="left:496.5px;top:19px;width:1px;height:7px;background:#4a4a4a"></div><div class="a" style="left:511.0px;top:1px;width:1px;height:25px;background:#4a4a4a"></div><div class="a" style="left:525.5px;top:19px;width:1px;height:7px;background:#4a4a4a"></div><div class="a" style="left:540.0px;top:19px;width:1px;height:7px;background:#4a4a4a"></div><div class="a" style="left:554.5px;top:16px;width:1px;height:10px;background:#4a4a4a"></div><div class="a" style="left:569.0px;top:19px;width:1px;height:7px;background:#4a4a4a"></div><div class="a" style="left:583.5px;top:19px;width:1px;height:7px;background:#4a4a4a"></div><div class="a" style="left:598.0px;top:1px;width:1px;height:25px;background:#4a4a4a"></div><div class="a" style="left:612.5px;top:19px;width:1px;height:7px;background:#4a4a4a"></div><div class="a" style="left:627.0px;top:19px;width:1px;height:7px;background:#4a4a4a"></div><div class="a" style="left:641.5px;top:16px;width:1px;height:10px;background:#4a4a4a"></div><div class="a" style="left:656.0px;top:19px;width:1px;height:7px;background:#4a4a4a"></div><div class="a" style="left:670.5px;top:19px;width:1px;height:7px;background:#4a4a4a"></div><div class="a" style="left:685.0px;top:1px;width:1px;height:25px;background:#4a4a4a"></div><div class="a" style="left:699.5px;top:19px;width:1px;height:7px;background:#4a4a4a"></div><div class="a" style="left:714.0px;top:19px;width:1px;height:7px;background:#4a4a4a"></div><div class="a" style="left:728.5px;top:16px;width:1px;height:10px;background:#4a4a4a"></div><div class="a" style="left:743.0px;top:19px;width:1px;height:7px;background:#4a4a4a"></div><div class="a" style="left:757.5px;top:19px;width:1px;height:7px;background:#4a4a4a"></div><div class="a" style="left:772.0px;top:1px;width:1px;height:25px;background:#4a4a4a"></div><div class="a" style="left:786.5px;top:19px;width:1px;height:7px;background:#4a4a4a"></div><div class="a" style="left:801.0px;top:19px;width:1px;height:7px;background:#4a4a4a"></div><div class="a" style="left:815.5px;top:16px;width:1px;height:10px;background:#4a4a4a"></div><div class="a" style="left:830.0px;top:19px;width:1px;height:7px;background:#4a4a4a"></div><div class="a" style="left:844.5px;top:19px;width:1px;height:7px;background:#4a4a4a"></div><div class="a" style="left:859.0px;top:1px;width:1px;height:25px;background:#4a4a4a"></div><div class="a" style="left:873.5px;top:19px;width:1px;height:7px;background:#4a4a4a"></div><div class="a" style="left:888.0px;top:19px;width:1px;height:7px;background:#4a4a4a"></div><div class="a" style="left:902.5px;top:16px;width:1px;height:10px;background:#4a4a4a"></div><div class="a" style="left:917.0px;top:19px;width:1px;height:7px;background:#4a4a4a"></div><div class="a" style="left:931.5px;top:19px;width:1px;height:7px;background:#4a4a4a"></div><div class="a" style="left:946.0px;top:1px;width:1px;height:25px;background:#4a4a4a"></div><div class="a" style="left:960.5px;top:19px;width:1px;height:7px;background:#4a4a4a"></div><div class="a" style="left:975.0px;top:19px;width:1px;height:7px;background:#4a4a4a"></div><div class="a" style="left:989.5px;top:16px;width:1px;height:10px;background:#4a4a4a"></div><div class="a" style="left:1004.0px;top:19px;width:1px;height:7px;background:#4a4a4a"></div><div class="a" style="left:1018.5px;top:19px;width:1px;height:7px;background:#4a4a4a"></div><div class="a" style="left:1033.0px;top:1px;width:1px;height:25px;background:#4a4a4a"></div><div class="a" style="left:1047.5px;top:19px;width:1px;height:7px;background:#4a4a4a"></div><div class="a" style="left:1062.0px;top:19px;width:1px;height:7px;background:#4a4a4a"></div><div class="a" style="left:1076.5px;top:16px;width:1px;height:10px;background:#4a4a4a"></div><div class="a" style="left:1091.0px;top:19px;width:1px;height:7px;background:#4a4a4a"></div><div class="a" style="left:1105.5px;top:19px;width:1px;height:7px;background:#4a4a4a"></div><div class="a" style="left:1120.0px;top:1px;width:1px;height:25px;background:#4a4a4a"></div><div class="a" style="left:1134.5px;top:19px;width:1px;height:7px;background:#4a4a4a"></div><div class="a" style="left:1149.0px;top:19px;width:1px;height:7px;background:#4a4a4a"></div><div class="a" style="left:1163.5px;top:16px;width:1px;height:10px;background:#4a4a4a"></div><div class="a" style="left:1178.0px;top:19px;width:1px;height:7px;background:#4a4a4a"></div><div class="a" style="left:1192.5px;top:19px;width:1px;height:7px;background:#4a4a4a"></div><div class="a" style="left:1207.0px;top:1px;width:1px;height:25px;background:#4a4a4a"></div><div class="a" style="left:1221.5px;top:19px;width:1px;height:7px;background:#4a4a4a"></div><div class="a" style="left:1236.0px;top:19px;width:1px;height:7px;background:#4a4a4a"></div><div class="a" style="left:1250.5px;top:16px;width:1px;height:10px;background:#4a4a4a"></div><div class="a" style="left:1265.0px;top:19px;width:1px;height:7px;background:#4a4a4a"></div><div class="t" style="left:-97.0px;top:2px;font-size:14px;line-height:16px;color:#a0a0a0;letter-spacing:0.2px">600</div><div class="t" style="left:-10.0px;top:2px;font-size:14px;line-height:16px;color:#a0a0a0;letter-spacing:0.2px">700</div><div class="t" style="left:77.0px;top:2px;font-size:14px;line-height:16px;color:#a0a0a0;letter-spacing:0.2px">800</div><div class="t" style="left:164.0px;top:2px;font-size:14px;line-height:16px;color:#a0a0a0;letter-spacing:0.2px">900</div><div class="t" style="left:251.0px;top:2px;font-size:14px;line-height:16px;color:#a0a0a0;letter-spacing:0.2px">1000</div><div class="t" style="left:338.0px;top:2px;font-size:14px;line-height:16px;color:#a0a0a0;letter-spacing:0.2px">1100</div><div class="t" style="left:425.0px;top:2px;font-size:14px;line-height:16px;color:#a0a0a0;letter-spacing:0.2px">1200</div><div class="t" style="left:512.0px;top:2px;font-size:14px;line-height:16px;color:#a0a0a0;letter-spacing:0.2px">1300</div><div class="t" style="left:599.0px;top:2px;font-size:14px;line-height:16px;color:#a0a0a0;letter-spacing:0.2px">1400</div><div class="t" style="left:686.0px;top:2px;font-size:14px;line-height:16px;color:#a0a0a0;letter-spacing:0.2px">1500</div><div class="t" style="left:773.0px;top:2px;font-size:14px;line-height:16px;color:#a0a0a0;letter-spacing:0.2px">1600</div><div class="t" style="left:860.0px;top:2px;font-size:14px;line-height:16px;color:#a0a0a0;letter-spacing:0.2px">1700</div><div class="t" style="left:947.0px;top:2px;font-size:14px;line-height:16px;color:#a0a0a0;letter-spacing:0.2px">1800</div><div class="t" style="left:1034.0px;top:2px;font-size:14px;line-height:16px;color:#a0a0a0;letter-spacing:0.2px">1900</div><div class="t" style="left:1121.0px;top:2px;font-size:14px;line-height:16px;color:#a0a0a0;letter-spacing:0.2px">2000</div><div class="t" style="left:1208.0px;top:2px;font-size:14px;line-height:16px;color:#a0a0a0;letter-spacing:0.2px">2100</div><div class="t" style="left:1295.0px;top:2px;font-size:14px;line-height:16px;color:#a0a0a0;letter-spacing:0.2px">2200</div></div>
<div class="a" style="left:145px;top:170px;width:26px;height:487px;overflow:hidden"><div class="a" style="left:19px;top:14.0px;width:7px;height:1px;background:#4a4a4a"></div><div class="t" style="left:3px;top:-56.5px;font-size:14px;line-height:14px;color:#a0a0a0;letter-spacing:0">6</div><div class="t" style="left:3px;top:-44.0px;font-size:14px;line-height:14px;color:#a0a0a0;letter-spacing:0">0</div><div class="t" style="left:3px;top:-31.5px;font-size:14px;line-height:14px;color:#a0a0a0;letter-spacing:0">0</div><div class="a" style="left:0;top:28.5px;width:26px;height:1px;background:#4a4a4a"></div><div class="a" style="left:19px;top:43.0px;width:7px;height:1px;background:#4a4a4a"></div><div class="a" style="left:19px;top:57.5px;width:7px;height:1px;background:#4a4a4a"></div><div class="a" style="left:16px;top:72.0px;width:10px;height:1px;background:#4a4a4a"></div><div class="a" style="left:19px;top:86.5px;width:7px;height:1px;background:#4a4a4a"></div><div class="a" style="left:19px;top:101.0px;width:7px;height:1px;background:#4a4a4a"></div><div class="t" style="left:3px;top:30.5px;font-size:14px;line-height:14px;color:#a0a0a0;letter-spacing:0">7</div><div class="t" style="left:3px;top:43.0px;font-size:14px;line-height:14px;color:#a0a0a0;letter-spacing:0">0</div><div class="t" style="left:3px;top:55.5px;font-size:14px;line-height:14px;color:#a0a0a0;letter-spacing:0">0</div><div class="a" style="left:0;top:115.5px;width:26px;height:1px;background:#4a4a4a"></div><div class="a" style="left:19px;top:130.0px;width:7px;height:1px;background:#4a4a4a"></div><div class="a" style="left:19px;top:144.5px;width:7px;height:1px;background:#4a4a4a"></div><div class="a" style="left:16px;top:159.0px;width:10px;height:1px;background:#4a4a4a"></div><div class="a" style="left:19px;top:173.5px;width:7px;height:1px;background:#4a4a4a"></div><div class="a" style="left:19px;top:188.0px;width:7px;height:1px;background:#4a4a4a"></div><div class="t" style="left:3px;top:117.5px;font-size:14px;line-height:14px;color:#a0a0a0;letter-spacing:0">8</div><div class="t" style="left:3px;top:130.0px;font-size:14px;line-height:14px;color:#a0a0a0;letter-spacing:0">0</div><div class="t" style="left:3px;top:142.5px;font-size:14px;line-height:14px;color:#a0a0a0;letter-spacing:0">0</div><div class="a" style="left:0;top:202.5px;width:26px;height:1px;background:#4a4a4a"></div><div class="a" style="left:19px;top:217.0px;width:7px;height:1px;background:#4a4a4a"></div><div class="a" style="left:19px;top:231.5px;width:7px;height:1px;background:#4a4a4a"></div><div class="a" style="left:16px;top:246.0px;width:10px;height:1px;background:#4a4a4a"></div><div class="a" style="left:19px;top:260.5px;width:7px;height:1px;background:#4a4a4a"></div><div class="a" style="left:19px;top:275.0px;width:7px;height:1px;background:#4a4a4a"></div><div class="t" style="left:3px;top:204.5px;font-size:14px;line-height:14px;color:#a0a0a0;letter-spacing:0">9</div><div class="t" style="left:3px;top:217.0px;font-size:14px;line-height:14px;color:#a0a0a0;letter-spacing:0">0</div><div class="t" style="left:3px;top:229.5px;font-size:14px;line-height:14px;color:#a0a0a0;letter-spacing:0">0</div><div class="a" style="left:0;top:289.5px;width:26px;height:1px;background:#4a4a4a"></div><div class="a" style="left:19px;top:304.0px;width:7px;height:1px;background:#4a4a4a"></div><div class="a" style="left:19px;top:318.5px;width:7px;height:1px;background:#4a4a4a"></div><div class="a" style="left:16px;top:333.0px;width:10px;height:1px;background:#4a4a4a"></div><div class="a" style="left:19px;top:347.5px;width:7px;height:1px;background:#4a4a4a"></div><div class="a" style="left:19px;top:362.0px;width:7px;height:1px;background:#4a4a4a"></div><div class="t" style="left:3px;top:291.5px;font-size:14px;line-height:14px;color:#a0a0a0;letter-spacing:0">1</div><div class="t" style="left:3px;top:304.0px;font-size:14px;line-height:14px;color:#a0a0a0;letter-spacing:0">0</div><div class="t" style="left:3px;top:316.5px;font-size:14px;line-height:14px;color:#a0a0a0;letter-spacing:0">0</div><div class="t" style="left:3px;top:329.0px;font-size:14px;line-height:14px;color:#a0a0a0;letter-spacing:0">0</div><div class="a" style="left:0;top:376.5px;width:26px;height:1px;background:#4a4a4a"></div><div class="a" style="left:19px;top:391.0px;width:7px;height:1px;background:#4a4a4a"></div><div class="a" style="left:19px;top:405.5px;width:7px;height:1px;background:#4a4a4a"></div><div class="a" style="left:16px;top:420.0px;width:10px;height:1px;background:#4a4a4a"></div><div class="a" style="left:19px;top:434.5px;width:7px;height:1px;background:#4a4a4a"></div><div class="a" style="left:19px;top:449.0px;width:7px;height:1px;background:#4a4a4a"></div><div class="t" style="left:3px;top:378.5px;font-size:14px;line-height:14px;color:#a0a0a0;letter-spacing:0">1</div><div class="t" style="left:3px;top:391.0px;font-size:14px;line-height:14px;color:#a0a0a0;letter-spacing:0">1</div><div class="t" style="left:3px;top:403.5px;font-size:14px;line-height:14px;color:#a0a0a0;letter-spacing:0">0</div><div class="t" style="left:3px;top:416.0px;font-size:14px;line-height:14px;color:#a0a0a0;letter-spacing:0">0</div><div class="a" style="left:0;top:463.5px;width:26px;height:1px;background:#4a4a4a"></div><div class="a" style="left:19px;top:478.0px;width:7px;height:1px;background:#4a4a4a"></div><div class="t" style="left:3px;top:465.5px;font-size:14px;line-height:14px;color:#a0a0a0;letter-spacing:0">1</div><div class="t" style="left:3px;top:478.0px;font-size:14px;line-height:14px;color:#a0a0a0;letter-spacing:0">2</div><div class="t" style="left:3px;top:490.5px;font-size:14px;line-height:14px;color:#a0a0a0;letter-spacing:0">0</div><div class="t" style="left:3px;top:503.0px;font-size:14px;line-height:14px;color:#a0a0a0;letter-spacing:0">0</div></div>
<div class="a" style="left:145px;top:144px;width:26px;height:26px;background:#232323;border-right:1px solid #3a3a3a;border-bottom:1px solid #3a3a3a"></div>
<div class="a" style="left:171px;top:170px;width:1273px;height:487px;background:#472f2f;overflow:hidden"><svg class="a" style="left:0;top:0" width="1273" height="487" viewBox="171 170 1273 487" shape-rendering="geometricPrecision"><polygon points="531.5,225 559,198 678.5,198 705.5,225 774.5,225 801.5,198 905.5,198 932,225 1001.5,225 1028.5,198 1190.5,198 1217.5,225 1217.5,617 531.5,617" fill="#f7d0c9"/><rect x="559" y="198" width="119.5" height="91.5" fill="#fdd7d1"/><rect x="801.5" y="198" width="104.0" height="91.5" fill="#fdd7d1"/><rect x="1028.5" y="198" width="162.0" height="91.5" fill="#fdd7d1"/><rect x="705.5" y="225" width="69.0" height="131" fill="#d69a93"/><rect x="932" y="225" width="69.5" height="131" fill="#d69a93"/><polygon points="531.5,368 559,301.5 678.5,301.5 705.5,368 774.5,368 801.5,301.5 905.5,301.5 932,368 1001.5,368 1028.5,301.5 1190.5,301.5 1217.5,368 1217.5,617 531.5,617" fill="#e8d1bf"/><rect x="559" y="289.5" width="119.5" height="4.5" fill="#e7c4c2"/><rect x="559" y="294" width="119.5" height="2" fill="#efd2ce"/><rect x="559" y="296" width="119.5" height="3.5" fill="#c09290"/><rect x="559" y="299.5" width="119.5" height="1" fill="#e6d0c6"/><rect x="559" y="300.5" width="119.5" height="1.2" fill="#b9968e"/><rect x="801.5" y="289.5" width="104.0" height="4.5" fill="#e7c4c2"/><rect x="801.5" y="294" width="104.0" height="2" fill="#efd2ce"/><rect x="801.5" y="296" width="104.0" height="3.5" fill="#c09290"/><rect x="801.5" y="299.5" width="104.0" height="1" fill="#e6d0c6"/><rect x="801.5" y="300.5" width="104.0" height="1.2" fill="#b9968e"/><rect x="1028.5" y="289.5" width="162.0" height="4.5" fill="#e7c4c2"/><rect x="1028.5" y="294" width="162.0" height="2" fill="#efd2ce"/><rect x="1028.5" y="296" width="162.0" height="3.5" fill="#c09290"/><rect x="1028.5" y="299.5" width="162.0" height="1" fill="#e6d0c6"/><rect x="1028.5" y="300.5" width="162.0" height="1.2" fill="#b9968e"/><rect x="702.5" y="356" width="75.0" height="7" fill="#d8b2ae"/><rect x="702.5" y="363" width="75.0" height="3" fill="#b47e7a"/><rect x="700.5" y="366" width="79.0" height="2" fill="#d9bcb3"/><rect x="929" y="356" width="75.5" height="7" fill="#d8b2ae"/><rect x="929" y="363" width="75.5" height="3" fill="#b47e7a"/><rect x="927" y="366" width="79.5" height="2" fill="#d9bcb3"/><polygon points="559.00,289.50 531.50,362.00 532.97,364.40 559.00,293.50" fill="#dbb3b1"/><polygon points="559.00,293.50 532.97,364.40 533.88,365.90 559.00,296.00" fill="#e6c3bf"/><polygon points="559.00,296.00 533.88,365.90 535.90,369.20 559.00,301.50" fill="#c99b98"/><polygon points="559.00,301.50 535.90,369.20 537.00,368.20 560.03,301.70" fill="#d7b7af"/><polygon points="678.50,289.50 705.50,356.00 704.03,360.00 678.50,293.50" fill="#dbb3b1"/><polygon points="678.50,293.50 704.03,360.00 703.12,362.50 678.50,296.00" fill="#e6c3bf"/><polygon points="678.50,296.00 703.12,362.50 701.10,368.00 678.50,301.50" fill="#c99b98"/><polygon points="678.50,301.50 701.10,368.00 700.00,368.20 677.47,301.70" fill="#d7b7af"/><polygon points="801.50,289.50 774.50,356.00 775.97,360.00 801.50,293.50" fill="#dbb3b1"/><polygon points="801.50,293.50 775.97,360.00 776.88,362.50 801.50,296.00" fill="#e6c3bf"/><polygon points="801.50,296.00 776.88,362.50 778.90,368.00 801.50,301.50" fill="#c99b98"/><polygon points="801.50,301.50 778.90,368.00 780.00,368.20 802.53,301.70" fill="#d7b7af"/><polygon points="905.50,289.50 932.00,356.00 930.53,360.00 905.50,293.50" fill="#dbb3b1"/><polygon points="905.50,293.50 930.53,360.00 929.62,362.50 905.50,296.00" fill="#e6c3bf"/><polygon points="905.50,296.00 929.62,362.50 927.60,368.00 905.50,301.50" fill="#c99b98"/><polygon points="905.50,301.50 927.60,368.00 926.50,368.20 904.47,301.70" fill="#d7b7af"/><polygon points="1028.50,289.50 1001.50,356.00 1002.97,360.00 1028.50,293.50" fill="#dbb3b1"/><polygon points="1028.50,293.50 1002.97,360.00 1003.88,362.50 1028.50,296.00" fill="#e6c3bf"/><polygon points="1028.50,296.00 1003.88,362.50 1005.90,368.00 1028.50,301.50" fill="#c99b98"/><polygon points="1028.50,301.50 1005.90,368.00 1007.00,368.20 1029.53,301.70" fill="#d7b7af"/><polygon points="1190.50,289.50 1217.50,362.00 1216.03,364.40 1190.50,293.50" fill="#dbb3b1"/><polygon points="1190.50,293.50 1216.03,364.40 1215.12,365.90 1190.50,296.00" fill="#e6c3bf"/><polygon points="1190.50,296.00 1215.12,365.90 1213.10,369.20 1190.50,301.50" fill="#c99b98"/><polygon points="1190.50,301.50 1213.10,369.20 1212.00,368.20 1189.47,301.70" fill="#d7b7af"/><circle cx="853.9" cy="225.4" r="13" fill="#fff" stroke="#a2705e" stroke-width="2.6"/><path d="M853.9 212 V239 M841 231.5 H867" stroke="#a2705e" stroke-width="2.4"/><rect x="838.2" y="249.2" width="31.3" height="50" fill="#a97b6b"/><rect x="838.2" y="249.2" width="31.3" height="3" fill="#9a6a5a"/><rect x="843" y="255" width="22" height="40" fill="none" stroke="#9c6e5e" stroke-width="1"/><ellipse cx="854" cy="268" rx="5" ry="5.5" fill="#fff"/><path d="M851.5 263 V270 M854 262.5 V270 M856.5 263 V270" stroke="#bbb" stroke-width="0.8"/><rect x="862.5" y="275.5" width="3.5" height="4" fill="#6e4a3e"/><path d="M849 280.5 H859" stroke="#946656" stroke-width="0.8"/><polygon points="821.4,306.9 888.3,306.9 896.6,327.5 811.1,327.5" fill="#93b77a"/><rect x="811.5" y="326" width="85" height="1.5" fill="#7fa468"/><polygon points="1039.2,238 1051.4,238 1056.5,254.3 1034.1,254.3" fill="#e4907e"/><rect x="1034.1" y="251.5" width="22.4" height="3" fill="#d0786a"/><rect x="1044.3" y="254" width="3" height="48" fill="#7d5250"/><rect x="1043" y="254" width="5.5" height="5" fill="#7d5250"/><rect x="1035.5" y="254" width="1.3" height="7" fill="#7d5250"/><ellipse cx="1045.8" cy="302.6" rx="9" ry="1.8" fill="#7d5250"/><rect x="1069.8" y="274.7" width="78.4" height="28" rx="2.5" fill="#b87a71"/><rect x="1072" y="301" width="7" height="4.5" rx="1" fill="#b07068"/><rect x="1139" y="301" width="7" height="4.5" rx="1" fill="#b07068"/><path d="M1073 285 H1098 M1120 285 H1145 M1073 290 H1098 M1120 290 H1145" stroke="#9d645c" stroke-width="0.9"/><rect x="1073" y="292" width="25" height="6" fill="none" stroke="#9d645c" stroke-width="0.8"/><rect x="1120" y="292" width="25" height="6" fill="none" stroke="#9d645c" stroke-width="0.8"/><rect x="1100.5" y="285" width="17" height="12" fill="#8c5850"/><rect x="1102" y="287" width="3" height="9" fill="#f2e6c0"/><rect x="1105.5" y="288" width="3" height="8" fill="#a8d8a0"/><rect x="1109" y="287" width="3" height="9" fill="#f0b0c0"/><rect x="1112.5" y="289" width="3" height="7" fill="#e8c8d8"/><rect x="1089" y="257" width="38.8" height="22.8" rx="3" fill="#a2625a"/><rect x="1092.5" y="261.5" width="23" height="14.5" rx="2" fill="none" stroke="#c88a80" stroke-width="1"/><rect x="1093.5" y="262.5" width="21" height="12.5" rx="1.5" fill="#6c3a33"/><rect x="1119" y="262" width="5" height="12" fill="none" stroke="#d8a090" stroke-width="0.8"/><polygon points="1164.5,287 1181.8,287 1179.5,303.2 1166.8,303.2" fill="#e19a91"/><rect x="1164" y="287" width="18.3" height="2.5" fill="#cf8078"/><ellipse cx="1110.5" cy="331.5" rx="46.6" ry="14.4" fill="#bd7870"/><ellipse cx="1110.5" cy="331.5" rx="35" ry="11" fill="#d6a888"/><ellipse cx="1110.5" cy="331.5" rx="27.5" ry="8.7" fill="#bd7870"/><ellipse cx="1110.5" cy="331.5" rx="21" ry="6.8" fill="#d6a888"/><ellipse cx="1110.5" cy="331.5" rx="12.5" ry="5.2" fill="#bd7870"/><g><circle cx="854.3" cy="469.5" r="6.8" fill="#f2a6ae" stroke="#e88a94" stroke-width="0.6"/><circle cx="862.4" cy="472.9" r="6.8" fill="#f2a6ae" stroke="#e88a94" stroke-width="0.6"/><circle cx="865.8" cy="481.0" r="6.8" fill="#f2a6ae" stroke="#e88a94" stroke-width="0.6"/><circle cx="862.4" cy="489.1" r="6.8" fill="#f2a6ae" stroke="#e88a94" stroke-width="0.6"/><circle cx="854.3" cy="492.5" r="6.8" fill="#f2a6ae" stroke="#e88a94" stroke-width="0.6"/><circle cx="846.2" cy="489.1" r="6.8" fill="#f2a6ae" stroke="#e88a94" stroke-width="0.6"/><circle cx="842.8" cy="481.0" r="6.8" fill="#f2a6ae" stroke="#e88a94" stroke-width="0.6"/><circle cx="846.2" cy="472.9" r="6.8" fill="#f2a6ae" stroke="#e88a94" stroke-width="0.6"/><circle cx="854.3" cy="481" r="9" fill="#ea7d88"/><circle cx="854.2" cy="482.1" r="7" fill="#f8d474"/><path d="M851 484 Q854.2 486.5 857.4 484" stroke="#b86a40" stroke-width="0.9" fill="none"/><polygon points="848,492 842,503 866,503 860,492" fill="#2e6a28"/><rect x="847" y="489.5" width="13.7" height="17" rx="2" fill="#4e6cb4"/><rect x="849" y="489" width="3" height="4" fill="#8ad070"/><rect x="856" y="489" width="3" height="4" fill="#8ad070"/><rect x="850.5" y="506" width="7.5" height="4" fill="#2e6a28"/><rect x="850.5" y="508" width="7.5" height="1.5" fill="#d0f0c0"/><rect x="849.5" y="510.5" width="9.5" height="3.5" rx="1" fill="#8a4a30"/></g></svg></div>
<div class="a" style="left:1013px;top:161px;width:415px;height:54px;background:rgba(0,0,0,0.66);border-radius:4px"></div>
<div class="a" style="left:1020px;top:183px;width:6px;height:11px;background:repeating-linear-gradient(180deg,#5a5a5a 0 1px,transparent 1px 3px)"></div>
<div class="a" style="left:1034px;top:170px;width:36px;height:36px;border:1px solid #3e3e3e;border-radius:4px;background:#212121;background:#6b7280;border-color:#9ca0a8"><svg class="a" style="left:0;top:0" width="34" height="34" viewBox="0 0 34 34"><rect x="7" y="6.5" width="20" height="21" rx="3" stroke="#f2f2f2" stroke-width="2" fill="none"/><path d="M17 6.5 V27.5 M7 17 H27" stroke="#f2f2f2" stroke-width="2"/></svg></div>
<div class="a" style="left:1071px;top:170px;width:14px;height:36px;border:1px solid #333;border-radius:3px;background:#212121"></div><svg class="a" style="left:1072px;top:184px" width="12" height="8"><path d="M1 1 H11 L6 6 Z" fill="#eee"/></svg>
<div class="a" style="left:1091px;top:176px;width:2px;height:24px;background:#333"></div>
<div class="a" style="left:1099px;top:170px;width:36px;height:36px;border:1px solid #3e3e3e;border-radius:4px;background:#212121;"><svg class="a" style="left:0;top:0" width="34" height="34" viewBox="0 0 34 34"><g stroke="#f2f2f2" stroke-width="2" fill="none" stroke-linecap="round"><circle cx="14.5" cy="14.5" r="8"/><path d="M10.5 14.5 H18.5"/><path d="M20.5 20.5 L26 26" stroke-width="3.2"/></g></svg></div>
<div class="a" style="left:1147px;top:170px;width:36px;height:36px;border:1px solid #3e3e3e;border-radius:4px;background:#212121;"><svg class="a" style="left:0;top:0" width="34" height="34" viewBox="0 0 34 34"><g stroke="#f2f2f2" stroke-width="2" fill="none" stroke-linecap="round"><circle cx="14.5" cy="14.5" r="8"/><path d="M10.5 12.8 H18.5 M10.5 16.2 H18.5"/><path d="M20.5 20.5 L26 26" stroke-width="3.2"/></g></svg></div>
<div class="a" style="left:1194px;top:170px;width:36px;height:36px;border:1px solid #3e3e3e;border-radius:4px;background:#212121;"><svg class="a" style="left:0;top:0" width="34" height="34" viewBox="0 0 34 34"><g stroke="#f2f2f2" stroke-width="2" fill="none" stroke-linecap="round"><circle cx="14.5" cy="14.5" r="8"/><path d="M10.5 14.5 H18.5 M14.5 10.5 V18.5"/><path d="M20.5 20.5 L26 26" stroke-width="3.2"/></g></svg></div>
<div class="a" style="left:1242px;top:170px;width:36px;height:36px;border:1px solid #3e3e3e;border-radius:4px;background:#212121;"><svg class="a" style="left:0;top:0" width="34" height="34" viewBox="0 0 34 34"><path d="M7 12 V7 H12 M22 7 H27 V12 M27 22 V27 H22 M12 27 H7 V22" stroke="#f2f2f2" stroke-width="2.2" fill="none" stroke-linejoin="round" stroke-linecap="round"/></svg></div>
<div class="a" style="left:1290px;top:170px;width:36px;height:36px;border:1px solid #3e3e3e;border-radius:4px;background:#212121;background:#6b7280;border-color:#9ca0a8"><svg class="a" style="left:0;top:0" width="34" height="34" viewBox="0 0 34 34"><rect x="4.9" y="4.1" width="25.4" height="25.7" rx="4.5" stroke="#b4b8c0" stroke-width="2" fill="none"/><rect x="10.4" y="9.6" width="14.8" height="14.9" fill="#6b7280" stroke="#fff" stroke-width="3"/></svg></div>
<div class="a" style="left:1338px;top:170px;width:36px;height:36px;border:1px solid #3e3e3e;border-radius:4px;background:#212121;"><svg class="a" style="left:0;top:0" width="34" height="34" viewBox="0 0 34 34"><path d="M11 8 V26 L25 17 Z" stroke="#f2f2f2" stroke-width="2.2" fill="none" stroke-linejoin="round" stroke-linecap="round"/></svg></div>
<div class="a" style="left:1386px;top:170px;width:36px;height:36px;border:1px solid #3e3e3e;border-radius:4px;background:#212121;"><svg class="a" style="left:0;top:0" width="34" height="34" viewBox="0 0 34 34"><path d="M6 17 L17.5 25 L29 17 M6 22 L17.5 30 L29 22" stroke="#6a6a6a" stroke-width="1.8" fill="none"/><path d="M16.8 3.5 L29.4 11.9 L17.2 20.3 L6 12 Z" fill="#fff"/><path d="M5 4.5 L12.5 11" stroke="#fff" stroke-width="2.6" stroke-linecap="round"/><path d="M7.5 12.5 L14 12.5 L13 6 Z" fill="#fff" stroke="#222" stroke-width="0.8"/></svg></div>

<div class="a" style="left:145px;top:657px;width:1299px;height:41px;background:#2a2a2a"></div>
<div class="a" style="left:148px;top:660px;width:147px;height:27px;background:#1b1b1b;border-radius:2px"></div>
<div class="a" style="left:297px;top:660px;width:1144px;height:27px;background:#1b1b1b;border-radius:2px"></div>
<div class="t" style="left:149px;top:663px;color:#e0e0e0;letter-spacing:0.1px">(2358, 1109)</div>
<div class="a" style="left:145px;top:689px;width:1299px;height:9px;background:#262626;border-top:1px solid #333"></div>
<div class="a" style="left:145px;top:697px;width:1299px;height:285px;background:#262626;border-top:2px solid #1c1c1c"></div>
<div class="a" style="left:150px;top:699px;width:1290px;height:276px;border-top:1px solid #343434;border-right:1px solid #343434"></div>
<div class="a" style="left:145px;top:698px;width:6px;height:278px;background:#262626;border-left:1px solid #1e1e1e"></div>
<svg class="a" style="left:361px;top:705px" width="206" height="28"><path d="M0 28 L1.6 6.5 Q2.3 0.5 8 0.5 H198 Q203.7 0.5 204.4 6.5 L206 28 Z" fill="#333"/></svg><div class="t" style="left:372px;top:709px;color:#7d7d7d;letter-spacing:0.35px">Search Results</div><svg class="a" style="left:543px;top:710px" width="16" height="16"><path d="M2 2 L14 14 M14 2 L2 14" stroke="#9aa4b4" stroke-width="1.8"/></svg>
<svg class="a" style="left:569px;top:705px" width="206" height="28"><path d="M0 28 L1.6 6.5 Q2.3 0.5 8 0.5 H198 Q203.7 0.5 204.4 6.5 L206 28 Z" fill="#333"/></svg><div class="t" style="left:580px;top:709px;color:#7d7d7d;letter-spacing:0.35px">Source Control</div><svg class="a" style="left:751px;top:710px" width="16" height="16"><path d="M2 2 L14 14 M14 2 L2 14" stroke="#9aa4b4" stroke-width="1.8"/></svg>
<svg class="a" style="left:778px;top:705px" width="206" height="28"><path d="M0 28 L1.6 6.5 Q2.3 0.5 8 0.5 H198 Q203.7 0.5 204.4 6.5 L206 28 Z" fill="#333"/></svg><div class="t" style="left:789px;top:709px;color:#7d7d7d;letter-spacing:0.35px">Breakpoints</div><svg class="a" style="left:960px;top:710px" width="16" height="16"><path d="M2 2 L14 14 M14 2 L2 14" stroke="#9aa4b4" stroke-width="1.8"/></svg>
<svg class="a" style="left:985px;top:705px" width="206" height="28"><path d="M0 28 L1.6 6.5 Q2.3 0.5 8 0.5 H198 Q203.7 0.5 204.4 6.5 L206 28 Z" fill="#333"/></svg><div class="t" style="left:996px;top:709px;color:#7d7d7d;letter-spacing:0.35px">Compile Errors</div><svg class="a" style="left:1167px;top:710px" width="16" height="16"><path d="M2 2 L14 14 M14 2 L2 14" stroke="#9aa4b4" stroke-width="1.8"/></svg>
<svg class="a" style="left:1194px;top:705px" width="206" height="28"><path d="M0 28 L1.6 6.5 Q2.3 0.5 8 0.5 H198 Q203.7 0.5 204.4 6.5 L206 28 Z" fill="#333"/></svg><div class="t" style="left:1205px;top:709px;color:#7d7d7d;letter-spacing:0.35px">Feather Messages</div><svg class="a" style="left:1376px;top:710px" width="16" height="16"><path d="M2 2 L14 14 M14 2 L2 14" stroke="#9aa4b4" stroke-width="1.8"/></svg>
<div class="a" style="left:152px;top:703px;width:207px;height:31px;background:#1c1c1c;border:1.5px solid #08a85c;border-bottom:none;border-radius:6px 6px 0 0"></div><div class="a" style="left:159px;top:732px;width:193px;height:2.2px;background:#08b060"></div><div class="t" style="left:163px;top:709px;color:#eaeaea;letter-spacing:0.35px">Output</div><svg class="a" style="left:335px;top:710px" width="16" height="16"><path d="M2 2 L14 14 M14 2 L2 14" stroke="#9aa4b4" stroke-width="1.8"/></svg>
<div class="a" style="left:1401px;top:709px;width:34px;height:24px;background:#303030;border-radius:5px 5px 0 0"></div><div class="t" style="left:1411px;top:710px;color:#eee">+</div>
<div class="a" style="left:359px;top:732px;width:1079px;height:2px;background:linear-gradient(90deg,#1a9a5c,rgba(26,154,92,0) 30%)"></div>
<div class="a" style="left:151px;top:737px;width:1287px;height:34px;background:#404040;border:1px solid #505050"></div>
<div class="t" style="left:169px;top:744px;color:#e8e8e8;letter-spacing:0.3px">Output</div>
<div class="a" style="left:151px;top:771px;width:1287px;height:204px;background:#212121;overflow:hidden">
<div class="mono" style="left:3px;top:-1.5px">Unsetting previous scheduler resolution of 1</div>
<div class="mono" style="left:3px;top:67.5px">C:\ProgramData/GameMakerStudio2/Cache/runtimes\runtime-2024.11.0.226/windows/x64/Runner.exe DONE (0)
Igor complete.
elapsed time 00:00:45.6040276s for command "C:\ProgramData/GameMakerStudio2/Cache/runtimes\runtime-2024.11.0.226/bin/igor.exe"
SUCCESS: Run Program Complete</div>
</div>
<div class="a" style="left:1418px;top:771px;width:20px;height:182px;background:#222;border-left:1px solid #2e2e2e"></div>
<svg class="a" style="left:1420px;top:774px" width="16" height="10"><path d="M2 8 L8 2 L14 8 Z" fill="#444"/></svg>
<div class="a" style="left:1420px;top:906px;width:15px;height:29px;background:#505050"></div>
<svg class="a" style="left:1420px;top:940px" width="16" height="10"><path d="M2 2 L8 8 L14 2 Z" fill="#444"/></svg>
<div class="a" style="left:154px;top:930px;width:1264px;height:23px;background:#474747"></div>
<div class="a" style="left:151px;top:953px;width:1267px;height:20px;background:#262626"></div>
<svg class="a" style="left:153px;top:956px" width="10" height="14"><path d="M8 2 L2 7 L8 12 Z" fill="#444"/></svg>
<svg class="a" style="left:1403px;top:956px" width="10" height="14"><path d="M2 2 L8 7 L2 12 Z" fill="#444"/></svg>
<div class="a" style="left:166px;top:955px;width:138px;height:16px;background:#555"></div>
<div class="a" style="left:1418px;top:953px;width:20px;height:20px;background:#000"></div>
<div class="a" style="left:145px;top:975px;width:1299px;height:7px;background:#2b2b2b;border-top:1px solid #1e1e1e"></div>
<svg class="a" style="left:786px;top:976px" width="16" height="6"><path d="M2 1 L8 5 L14 1" stroke="#777" stroke-width="1.3" fill="none"/></svg>



<div class="a" style="left:1443px;top:108px;width:2px;height:874px;background:#1e1e1e"></div>
<div class="a" style="left:1445px;top:108px;width:9px;height:874px;background:#2c2c2c"></div>
<div class="a" style="left:1454px;top:108px;width:433px;height:867px;background:#262626"></div>
<div class="a" style="left:1885px;top:108px;width:19px;height:874px;background:#282828;border-left:2px solid #1c1c1c"></div>
<div class="t" style="left:1892px;top:542px;font-size:19px;color:#9a9a9a;letter-spacing:-1px">&#187;</div>
<svg class="a" style="left:1654px;top:112px" width="194" height="29"><path d="M0 29 L1.6 6.5 Q2.3 0.5 8 0.5 H186 Q191.7 0.5 192.4 6.5 L194 29 Z" fill="#333"/></svg><div class="t" style="left:1662px;top:117px;color:#7d7d7d;letter-spacing:0.35px">Room Editor</div><svg class="a" style="left:1823px;top:118px" width="16" height="16"><path d="M2 2 L14 14 M14 2 L2 14" stroke="#9aa4b4" stroke-width="1.8"/></svg>
<div class="a" style="left:1456px;top:111px;width:197px;height:31px;background:#1c1c1c;border:1.5px solid #08a85c;border-bottom:none;border-radius:6px 6px 0 0"></div><div class="a" style="left:1464px;top:140px;width:180px;height:2.2px;background:#08b060"></div><div class="t" style="left:1466px;top:117px;color:#eaeaea;letter-spacing:0.35px">Assets</div><svg class="a" style="left:1627px;top:118px" width="16" height="16"><path d="M2 2 L14 14 M14 2 L2 14" stroke="#9aa4b4" stroke-width="1.8"/></svg>
<div class="a" style="left:1653px;top:140px;width:230px;height:2px;background:linear-gradient(90deg,#1a9a5c,rgba(26,154,92,0) 60%)"></div>
<div class="a" style="left:1849px;top:117px;width:34px;height:24px;background:#303030;border-radius:5px 5px 0 0"></div><div class="t" style="left:1859px;top:119px;color:#eee">+</div>
<div class="a" style="left:1455px;top:145px;width:430px;height:35px;background:#404040;border:1px solid #545454"></div>
<div class="t" style="left:1472px;top:152px;color:#e8e8e8;letter-spacing:0.35px">Asset Browser</div>
<div class="a" style="left:1455px;top:182px;width:431px;height:50px;background:#262626"></div>
<div class="a" style="left:1461px;top:190px;width:284px;height:33px;background:#1e1e1e;border:1px solid #2a2a2a;border-radius:3px"></div>
<svg class="a" style="left:1464px;top:194px" width="24" height="24"><circle cx="10" cy="10" r="7" stroke="#f0f0f0" stroke-width="1.9" fill="none"/><path d="M15 15 L20.5 20.5" stroke="#f0f0f0" stroke-width="2.6" stroke-linecap="round"/></svg>
<div class="t" style="left:1498px;top:196px;color:#8a8a8a;letter-spacing:0.35px">Search...</div>
<div class="a" style="left:1759px;top:187px;width:2px;height:33px;background:#3a3a3a"></div>
<div class="a" style="left:1842px;top:187px;width:2px;height:33px;background:#3a3a3a"></div>
<svg class="a" style="left:1772px;top:192px" width="24" height="24"><circle cx="12" cy="12" r="9.5" stroke="#f0f0f0" stroke-width="1.9" fill="none"/><path d="M12 7 V17 M7 12 H17" stroke="#f0f0f0" stroke-width="2"/></svg>
<svg class="a" style="left:1809px;top:194px" width="22" height="22"><path d="M2 2.5 H20 L13.5 10.5 V18.5 L9 16.5 V10.5 Z" stroke="#e8e8e8" stroke-width="1.6" fill="none" stroke-linejoin="round"/><path d="M9 10.5 H13.5" stroke="#e8e8e8" stroke-width="1.4"/></svg>
<svg class="a" style="left:1856px;top:195px" width="24" height="18"><path d="M2 3 H22 M2 9 H22 M2 15 H22" stroke="#f5f5f5" stroke-width="2.8" stroke-linecap="round"/></svg>
<div class="a" style="left:1454px;top:232px;width:412px;height:676px;background:#202020"></div>
<div class="a" style="left:1454px;top:232px;width:412px;height:172px;background:#353535"></div>
<div class="a" style="left:1454px;top:644px;width:412px;height:33px;background:#373b42"></div>
<div class="a" style="left:1454px;top:677px;width:412px;height:131px;background:#2d2e30"></div>
<div class="a" style="left:1454px;top:677px;width:412px;height:33px;background:#5a6580"></div>
<div class="a" style="left:1866px;top:232px;width:19px;height:676px;background:#1e1e1e"></div>
<div class="a" style="left:1868px;top:289px;width:15px;height:464px;background:linear-gradient(90deg,#4a4a4a,#5c5c5c 50%,#4a4a4a)"></div>
<svg class="a" style="left:1868px;top:234px" width="16" height="10"><path d="M2 8 L8 2 L14 8 Z" fill="#555"/></svg>
<svg class="a" style="left:1868px;top:896px" width="16" height="10"><path d="M2 2 L8 8 L14 2 Z" fill="#555"/></svg>
<div class="a" style="left:1468px;top:232px;width:2px;height:155px;background:#464646"></div>
<div class="a" style="left:1469px;top:255px;width:15px;height:2px;background:#464646"></div><div class="a" style="left:1469px;top:288px;width:15px;height:2px;background:#464646"></div><div class="a" style="left:1469px;top:321px;width:15px;height:2px;background:#464646"></div><div class="a" style="left:1469px;top:354px;width:15px;height:2px;background:#464646"></div><div class="a" style="left:1469px;top:387px;width:15px;height:2px;background:#464646"></div>
<svg class="a" style="left:1493px;top:246px" width="12" height="18"><path d="M2.2 1.8 L9.8 9 L2.2 16.2 Z" stroke="#e0e0e0" stroke-width="1.5" fill="none" stroke-linejoin="miter"/></svg><svg class="a" style="left:1517px;top:243px" width="26" height="24"><path d="M12 21.5 L3.2 12.8 Q-0.5 8.5 2.2 4.5 Q6.5 -0.5 12 4.8 Q17.5 -0.5 21.8 4.5 Q24.5 8.5 20.8 12.8 Z" fill="#f4f4f4"/></svg><div class="t" style="left:1548px;top:246px;color:#ececec;letter-spacing:0.35px">Favourites</div>
<svg class="a" style="left:1493px;top:279px" width="12" height="18"><path d="M1.8 0.8 L10.3 9 L1.8 17.2 Z" fill="#f4f4f4"/></svg><svg class="a" style="left:1518px;top:277px" width="22" height="22"><rect x="1.5" y="2" width="5.5" height="5.5" stroke="#eee" stroke-width="1.4" fill="none" stroke-dasharray="1.5 1"/><rect x="1.5" y="12" width="5.5" height="5.5" stroke="#eee" stroke-width="1.8" fill="none"/><path d="M15 2 V19 M11.5 5.5 L15 2 L18.5 5.5 M11.5 15.5 L15 19 L18.5 15.5" stroke="#eee" stroke-width="2" fill="none"/></svg><div class="t" style="left:1548px;top:279px;color:#ececec;letter-spacing:0.35px">Room Order</div>
<svg class="a" style="left:1493px;top:312px" width="12" height="18"><path d="M2.2 1.8 L9.8 9 L2.2 16.2 Z" stroke="#e0e0e0" stroke-width="1.5" fill="none" stroke-linejoin="miter"/></svg><svg class="a" style="left:1518px;top:310px" width="22" height="22"><circle cx="8.5" cy="8.5" r="6.5" stroke="#eee" stroke-width="1.8" fill="none"/><path d="M13 13 L19 19" stroke="#eee" stroke-width="2.6" stroke-linecap="round"/></svg><div class="t" style="left:1548px;top:312px;color:#ececec;letter-spacing:0.35px">Saved Searches</div>
<svg class="a" style="left:1493px;top:345px" width="12" height="18"><path d="M2.2 1.8 L9.8 9 L2.2 16.2 Z" stroke="#e0e0e0" stroke-width="1.5" fill="none" stroke-linejoin="miter"/></svg><svg class="a" style="left:1518px;top:343px" width="22" height="22"><path d="M1 11 L11 1 H20 V10 L10 20 Z" fill="#f2f2f2" stroke="#f2f2f2" stroke-width="1" stroke-linejoin="round"/><circle cx="15" cy="6" r="2" fill="#353535"/></svg><div class="t" style="left:1548px;top:345px;color:#ececec;letter-spacing:0.35px">Tags</div>
<svg class="a" style="left:1493px;top:378px" width="12" height="18"><path d="M1.8 0.8 L10.3 9 L1.8 17.2 Z" fill="#f4f4f4"/></svg><svg class="a" style="left:1518px;top:376px" width="22" height="22"><path d="M10.5 2 L12.5 2 L13 4.5 L15 5.3 L17 3.8 L18.5 5.3 L17 7.3 L17.8 9.3 L20.3 9.8 L20.3 11.8 L17.8 12.3 L17 14.3 L18.5 16.3 L17 17.8 L15 16.3 L13 17.1 L12.5 19.6 L10 19.6 L9.5 17.1 L7.5 16.3 L5.5 17.8 L4 16.3 L5.5 14.3 L4.7 12.3 L2.2 11.8 L2.2 9.8 L4.7 9.3 L5.5 7.3 L4 5.3 L5.5 3.8 L7.5 5.3 L9.5 4.5 Z" stroke="#eee" stroke-width="1.5" fill="none"/><circle cx="11.3" cy="10.8" r="3" stroke="#eee" stroke-width="1.5" fill="none"/></svg><div class="t" style="left:1548px;top:378px;color:#ececec;letter-spacing:0.35px">Game Options</div>
<svg class="a" style="left:1462px;top:420px" width="12" height="18"><path d="M2.2 1.8 L9.8 9 L2.2 16.2 Z" stroke="#e0e0e0" stroke-width="1.5" fill="none" stroke-linejoin="miter"/></svg><svg class="a" style="left:1486px;top:420px" width="26" height="18"><path d="M1.5 4.5 V2 H8.5 V4.5" stroke="#5a5a5a" stroke-width="1.2" fill="none"/><rect x="1.5" y="6.5" width="23" height="10" stroke="#5a5a5a" stroke-width="1.4" fill="none"/></svg><div class="t" style="left:1518px;top:420px;color:#ececec;letter-spacing:0.35px">Animation Curves</div>
<svg class="a" style="left:1462px;top:453px" width="12" height="18"><path d="M2.2 1.8 L9.8 9 L2.2 16.2 Z" stroke="#e0e0e0" stroke-width="1.5" fill="none" stroke-linejoin="miter"/></svg><svg class="a" style="left:1486px;top:453px" width="26" height="18"><path d="M1.5 4.5 V2 H8.5 V4.5" stroke="#5a5a5a" stroke-width="1.2" fill="none"/><rect x="1.5" y="6.5" width="23" height="10" stroke="#5a5a5a" stroke-width="1.4" fill="none"/></svg><div class="t" style="left:1518px;top:453px;color:#ececec;letter-spacing:0.35px">Extensions</div>
<svg class="a" style="left:1462px;top:486px" width="12" height="18"><path d="M1.8 0.8 L10.3 9 L1.8 17.2 Z" fill="#f4f4f4"/></svg><svg class="a" style="left:1486px;top:486px" width="26" height="18"><path d="M1 5 V2 H8 L9 3.5 V5 Z" fill="#5a5a5a"/><rect x="1" y="5" width="24" height="12" fill="#5a5a5a"/></svg><div class="t" style="left:1518px;top:486px;color:#ececec;letter-spacing:0.35px">Fonts</div>
<svg class="a" style="left:1462px;top:519px" width="12" height="18"><path d="M2.2 1.8 L9.8 9 L2.2 16.2 Z" stroke="#e0e0e0" stroke-width="1.5" fill="none" stroke-linejoin="miter"/></svg><svg class="a" style="left:1486px;top:519px" width="26" height="18"><path d="M1.5 4.5 V2 H8.5 V4.5" stroke="#5a5a5a" stroke-width="1.2" fill="none"/><rect x="1.5" y="6.5" width="23" height="10" stroke="#5a5a5a" stroke-width="1.4" fill="none"/></svg><div class="t" style="left:1518px;top:519px;color:#ececec;letter-spacing:0.35px">Notes</div>
<svg class="a" style="left:1462px;top:552px" width="12" height="18"><path d="M1.8 0.8 L10.3 9 L1.8 17.2 Z" fill="#f4f4f4"/></svg><svg class="a" style="left:1486px;top:552px" width="26" height="18"><path d="M1 5 V2 H8 L9 3.5 V5 Z" fill="#5a5a5a"/><rect x="1" y="5" width="24" height="12" fill="#5a5a5a"/></svg><div class="t" style="left:1518px;top:552px;color:#ececec;letter-spacing:0.35px">Objects</div>
<svg class="a" style="left:1462px;top:585px" width="12" height="18"><path d="M2.2 1.8 L9.8 9 L2.2 16.2 Z" stroke="#e0e0e0" stroke-width="1.5" fill="none" stroke-linejoin="miter"/></svg><svg class="a" style="left:1486px;top:585px" width="26" height="18"><path d="M1.5 4.5 V2 H8.5 V4.5" stroke="#5a5a5a" stroke-width="1.2" fill="none"/><rect x="1.5" y="6.5" width="23" height="10" stroke="#5a5a5a" stroke-width="1.4" fill="none"/></svg><div class="t" style="left:1518px;top:585px;color:#ececec;letter-spacing:0.35px">Particle Systems</div>
<svg class="a" style="left:1462px;top:618px" width="12" height="18"><path d="M2.2 1.8 L9.8 9 L2.2 16.2 Z" stroke="#e0e0e0" stroke-width="1.5" fill="none" stroke-linejoin="miter"/></svg><svg class="a" style="left:1486px;top:618px" width="26" height="18"><path d="M1.5 4.5 V2 H8.5 V4.5" stroke="#5a5a5a" stroke-width="1.2" fill="none"/><rect x="1.5" y="6.5" width="23" height="10" stroke="#5a5a5a" stroke-width="1.4" fill="none"/></svg><div class="t" style="left:1518px;top:618px;color:#ececec;letter-spacing:0.35px">Paths</div>
<svg class="a" style="left:1460px;top:651px" width="18" height="16"><path d="M1 2.5 H17 L9 12.5 Z" fill="#f4f4f4"/></svg><svg class="a" style="left:1486px;top:651px" width="26" height="18"><path d="M1 13 V2 H8 L10 5 H25 V16 H1 Z" fill="#4a5058"/><path d="M1 8 H25" stroke="#3e434a" stroke-width="1.2"/></svg><div class="t" style="left:1518px;top:651px;color:#ececec;letter-spacing:0.35px">Rooms</div>
<div class="a" style="left:1468px;top:677px;width:2px;height:116px;background:#464646"></div>
<div class="a" style="left:1469px;top:693px;width:15px;height:2px;background:#464646"></div><svg class="a" style="left:1517px;top:681px" width="24" height="24"><rect x="1.5" y="1.5" width="21" height="21" rx="3" stroke="#f5f5f5" stroke-width="2" fill="none"/><path d="M12 1.5 V22.5 M1.5 12 H22.5" stroke="#f5f5f5" stroke-width="2"/></svg><div class="t" style="left:1548px;top:684px;color:#ececec;letter-spacing:0.35px">Player_House</div>
<div class="a" style="left:1469px;top:726px;width:15px;height:2px;background:#464646"></div><svg class="a" style="left:1517px;top:714px" width="24" height="24"><rect x="1.5" y="1.5" width="21" height="21" rx="3" stroke="#f5f5f5" stroke-width="2" fill="none"/><path d="M12 1.5 V22.5 M1.5 12 H22.5" stroke="#f5f5f5" stroke-width="2"/></svg><div class="t" style="left:1548px;top:717px;color:#ececec;letter-spacing:0.35px">Start</div>
<div class="a" style="left:1469px;top:759px;width:15px;height:2px;background:#464646"></div><svg class="a" style="left:1517px;top:747px" width="24" height="24"><rect x="1.5" y="1.5" width="21" height="21" rx="3" stroke="#f5f5f5" stroke-width="2" fill="none"/><path d="M12 1.5 V22.5 M1.5 12 H22.5" stroke="#f5f5f5" stroke-width="2"/></svg><div class="t" style="left:1548px;top:750px;color:#ececec;letter-spacing:0.35px">Test_room</div>
<div class="a" style="left:1469px;top:792px;width:15px;height:2px;background:#464646"></div><svg class="a" style="left:1517px;top:780px" width="24" height="24"><rect x="1.5" y="1.5" width="21" height="21" rx="3" stroke="#f5f5f5" stroke-width="2" fill="none"/><path d="M12 1.5 V22.5 M1.5 12 H22.5" stroke="#f5f5f5" stroke-width="2"/></svg><div class="t" style="left:1548px;top:783px;color:#ececec;letter-spacing:0.35px">Tv</div>
<svg class="a" style="left:1488px;top:714px" width="22" height="22"><rect x="0" y="0" width="22" height="22" fill="#5a6580"/><path d="M11 3 L20 11 H17 V19 H13 V14 H9 V19 H5 V11 H2 Z" fill="#fff"/></svg>
<svg class="a" style="left:1462px;top:816px" width="12" height="18"><path d="M1.8 0.8 L10.3 9 L1.8 17.2 Z" fill="#f4f4f4"/></svg><svg class="a" style="left:1486px;top:816px" width="26" height="18"><path d="M1 5 V2 H8 L9 3.5 V5 Z" fill="#5a5a5a"/><rect x="1" y="5" width="24" height="12" fill="#5a5a5a"/></svg><div class="t" style="left:1518px;top:816px;color:#ececec;letter-spacing:0.35px">Scripts</div>
<svg class="a" style="left:1462px;top:849px" width="12" height="18"><path d="M2.2 1.8 L9.8 9 L2.2 16.2 Z" stroke="#e0e0e0" stroke-width="1.5" fill="none" stroke-linejoin="miter"/></svg><svg class="a" style="left:1486px;top:849px" width="26" height="18"><path d="M1.5 4.5 V2 H8.5 V4.5" stroke="#5a5a5a" stroke-width="1.2" fill="none"/><rect x="1.5" y="6.5" width="23" height="10" stroke="#5a5a5a" stroke-width="1.4" fill="none"/></svg><div class="t" style="left:1518px;top:849px;color:#ececec;letter-spacing:0.35px">Sequences</div>
<svg class="a" style="left:1462px;top:882px" width="12" height="18"><path d="M2.2 1.8 L9.8 9 L2.2 16.2 Z" stroke="#e0e0e0" stroke-width="1.5" fill="none" stroke-linejoin="miter"/></svg><svg class="a" style="left:1486px;top:882px" width="26" height="18"><path d="M1.5 4.5 V2 H8.5 V4.5" stroke="#5a5a5a" stroke-width="1.2" fill="none"/><rect x="1.5" y="6.5" width="23" height="10" stroke="#5a5a5a" stroke-width="1.4" fill="none"/></svg><div class="t" style="left:1518px;top:882px;color:#ececec;letter-spacing:0.35px">Shaders</div>
<div class="a" style="left:1454px;top:908px;width:431px;height:32px;background:#232323;border-top:1px solid #1a1a1a"></div>
<div class="a" style="left:1454px;top:940px;width:431px;height:33px;background:#232323;border-top:1px solid #2e2e2e"></div>
<div class="t" style="left:1461px;top:947px;color:#6e6e6e;letter-spacing:0.35px">21 items</div>
<div class="t" style="left:1551px;top:947px;color:#6e6e6e;letter-spacing:0.35px">1 selected</div>
<div class="t" style="left:1692px;top:947px;color:#6e6e6e;letter-spacing:0.2px">100%</div>
<div class="a" style="left:1748px;top:950px;width:8px;height:6px;background:#7a7a7a"></div>
<div class="a" style="left:1761px;top:951px;width:100px;height:6px;background:#1b1b1b"></div>
<div class="a" style="left:1763px;top:951px;width:24px;height:4px;background:#50586a;border-radius:2px"></div>
<svg class="a" style="left:1779px;top:953px" width="16" height="10"><path d="M2 9 L8 2 L14 9 Z" fill="#6a7080"/></svg>
<div class="a" style="left:1867px;top:949px;width:13px;height:10px;background:#7a7a7a"></div>
<div class="a" style="left:1454px;top:973px;width:433px;height:9px;background:#2b2b2b;border-top:1px solid #1e1e1e"></div>



</body></html>
